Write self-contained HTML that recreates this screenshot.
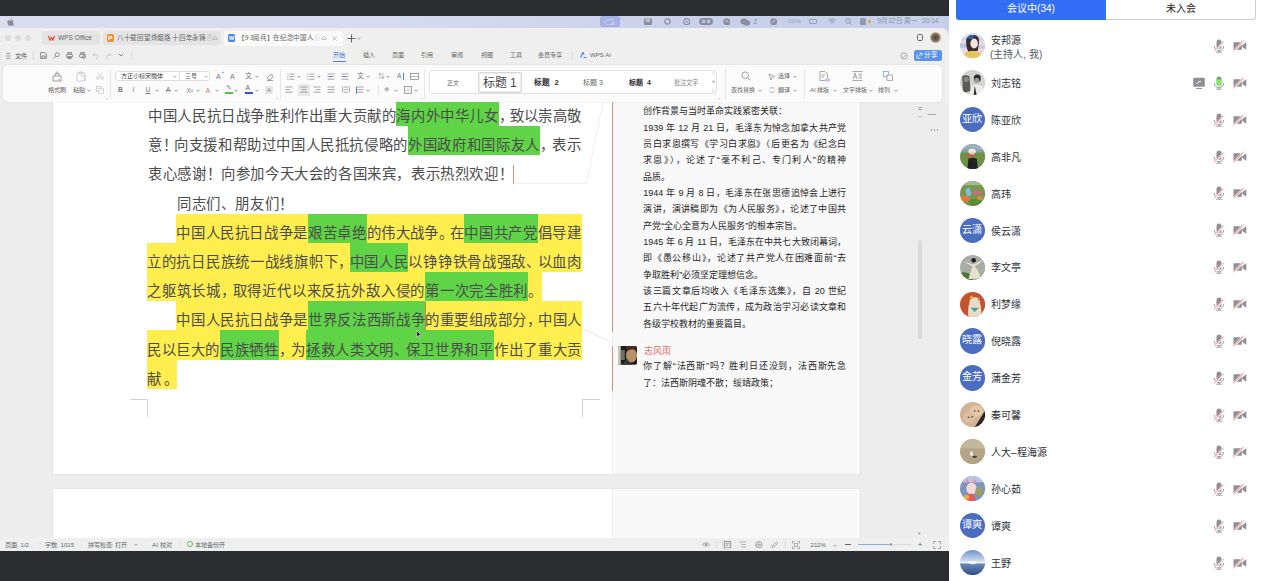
<!DOCTYPE html><html lang="zh-CN"><head><meta charset="utf-8"><style>
*{box-sizing:border-box;margin:0;padding:0}
html,body{width:1263px;height:581px;overflow:hidden;background:#2c2d31;font-family:"Liberation Sans",sans-serif;position:relative}
.a{position:absolute}
.t{position:absolute;white-space:nowrap;line-height:1}
</style></head><body>
<div class="a" style="left:0;top:0;width:949px;height:16px;background:#2c2d31"></div>
<div class="a" style="left:0;top:16px;width:949px;height:20px;background:linear-gradient(90deg,#d9ddef 0,#d6dbef 40%,#c8d1ea 75%,#c6d0ea 100%)"></div>
<div class="a" style="left:0;top:27.5px;width:949px;height:523px;background:#efefef;border-top-right-radius:8px"></div>
<div class="a" style="left:0;top:102px;width:949px;height:436px;background:#ededed"></div>
<div class="a" style="left:53px;top:102px;width:807px;height:372px;background:#fff;box-shadow:0 0 1.5px rgba(0,0,0,.12)"></div>
<div class="a" style="left:612px;top:102px;width:248px;height:372px;background:#f9f9f9;border-left:1px solid #eeeeee"></div>
<div class="a" style="left:53px;top:489px;width:807px;height:49px;background:#fff;box-shadow:0 0 1.5px rgba(0,0,0,.12)"></div>
<div class="a" style="left:612px;top:489px;width:248px;height:49px;background:#f9f9f9;border-left:1px solid #ececec"></div>
<div class="a" style="left:3px;top:65px;width:939px;height:37px;background:#fbfbfb;border-radius:5px;box-shadow:0 0 1.5px rgba(0,0,0,.18)"></div>
<div class="a" style="left:0;top:550.5px;width:949px;height:31px;background:#2c2d31"></div>
<svg class="a" style="left:7.0px;top:17.5px" width="7" height="8" viewBox="0 0 7 8"><path d="M3.6 1.9 C3.7 1 4.3 0.4 5 0.3 C5.1 1.1 4.5 1.8 3.6 1.9 Z M5.3 2.3 C6.1 2.3 6.6 2.8 6.8 3.1 C6.1 3.5 5.9 4.3 6 4.8 C6.1 5.4 6.5 5.9 7 6.1 C6.7 7 6.1 7.9 5.4 7.9 C4.9 7.9 4.7 7.6 4.1 7.6 C3.5 7.6 3.2 7.9 2.7 7.9 C1.9 7.9 0.3 6.2 0.3 4.3 C0.3 2.9 1.2 2.2 2.1 2.2 C2.7 2.2 3.1 2.6 3.6 2.6 C4.1 2.6 4.6 2.3 5.3 2.3 Z" fill="#8b8c98"/></svg>
<div class="a" style="left:600.2px;top:16.0px;width:19.4px;height:11.4px;background:#a6b1e4;border-radius:2.5px"></div>
<svg class="a" style="left:605.0px;top:18.8px" width="10" height="6.5" viewBox="0 0 10 6.5"><rect x="0.6" y="0.6" width="7.5" height="5" rx="0.8" fill="none" stroke="#c8d0f0" stroke-width="0.9"/><rect x="6.3" y="3.6" width="3.2" height="2.5" fill="#c8d0f0"/></svg>
<div class="a" style="left:644.0px;top:17.6px;width:8.0px;height:7.4px;background:#8a8fa0;border-radius:1px"></div>
<div class="t" style="left:645.2px;top:18.4px;font-size:5.5px;color:#d3d9ee;font-weight:bold">W</div>
<svg class="a" style="left:664.0px;top:17.8px" width="7" height="7" viewBox="0 0 7 7"><circle cx="3.5" cy="3.5" r="2.6" fill="none" stroke="#8a8fa0" stroke-width="1.3"/></svg>
<svg class="a" style="left:682.5px;top:17.8px" width="7.4" height="7.4" viewBox="0 0 7.4 7.4"><circle cx="3.7" cy="3.7" r="3" fill="none" stroke="#8a8fa0" stroke-width="1.2"/><circle cx="3.7" cy="3.7" r="1" fill="#8a8fa0"/></svg>
<div class="a" style="left:699.0px;top:17.8px;width:14.0px;height:7.4px;background:#8a8fa0;border-radius:3.7px"></div>
<div class="a" style="left:702.0px;top:19.6px;width:3.2px;height:3.8px;background:transparent;border:0.7px solid #c8d0e6"></div>
<div class="a" style="left:707.0px;top:19.6px;width:3.2px;height:3.8px;background:transparent;border:0.7px solid #c8d0e6"></div>
<svg class="a" style="left:722.5px;top:17.6px" width="7.6" height="7.6" viewBox="0 0 7.6 7.6"><circle cx="3.8" cy="3.8" r="3.6" fill="#8a8fa0"/><path d="M2 4 L4 2.5 L5.5 4.5" stroke="#d3d9ee" stroke-width="0.8" fill="none"/></svg>
<svg class="a" style="left:740.0px;top:17.6px" width="11" height="8" viewBox="0 0 11 8"><ellipse cx="4" cy="3.5" rx="3.6" ry="3" fill="#8a8fa0"/><ellipse cx="7" cy="5" rx="3.2" ry="2.7" fill="#8a8fa0"/></svg>
<div class="t" style="left:753.5px;top:18.8px;font-size:6.5px;color:#8a8fa0;">2</div>
<svg class="a" style="left:770.0px;top:17.8px" width="7.4" height="7.4" viewBox="0 0 7.4 7.4"><circle cx="3.7" cy="3.7" r="3.5" fill="#8a8fa0"/><path d="M2 5 L5 2" stroke="#d3d9ee" stroke-width="1"/></svg>
<div class="t" style="left:787.5px;top:18.5px;font-size:5.2px;color:#9aa0b2;">100%</div>
<div class="a" style="left:808.5px;top:18.9px;width:8.5px;height:5.0px;background:transparent;border:0.8px solid #9aa0b2;border-radius:1px"></div>
<svg class="a" style="left:827.5px;top:17.8px" width="8" height="6" viewBox="0 0 8 6"><path d="M0.6 2.2 Q4 -0.6 7.4 2.2 M1.8 3.6 Q4 1.8 6.2 3.6 M3 5 Q4 4.2 5 5" fill="none" stroke="#8a8fa0" stroke-width="0.9"/></svg>
<svg class="a" style="left:845.0px;top:18.0px" width="7" height="7" viewBox="0 0 7 7"><circle cx="2.9" cy="2.9" r="2.2" fill="none" stroke="#8a8fa0" stroke-width="0.9"/><path d="M4.5 4.5 L6.5 6.5" stroke="#8a8fa0" stroke-width="1"/></svg>
<div class="a" style="left:859.5px;top:18.3px;width:6.0px;height:6.5px;background:#8a8fa0;border-radius:1.5px;opacity:.85"></div>
<div class="a" style="left:868.3px;top:20.3px;width:2.4px;height:2.4px;background:#f0a030;border-radius:50%"></div>
<div class="t" style="left:877.5px;top:17.8px;font-size:6.6px;color:#8c92a6;">9月22日 周一&nbsp; 20:14</div>
<div class="a" style="left:4.8px;top:34.7px;width:6.4px;height:6.4px;background:#dcdcdc;border-radius:50%"></div>
<div class="a" style="left:14.8px;top:34.7px;width:6.4px;height:6.4px;background:#dcdcdc;border-radius:50%"></div>
<div class="a" style="left:24.8px;top:34.7px;width:6.4px;height:6.4px;background:#dcdcdc;border-radius:50%"></div>
<div class="a" style="left:42.0px;top:30.8px;width:58.0px;height:14.6px;background:#e4e4e4;border-radius:4px"></div>
<svg class="a" style="left:47.5px;top:34.5px" width="7" height="6" viewBox="0 0 7 6"><path d="M0.5 0.8 L2 5.2 L3.5 2.5 L5 5.2 L6.5 0.8" fill="none" stroke="#e84c3d" stroke-width="1.2"/></svg>
<div class="t" style="left:58.0px;top:35.4px;font-size:6.6px;color:#666;">WPS Office</div>
<div class="a" style="left:103.0px;top:30.8px;width:118.0px;height:14.6px;background:#e4e4e4;border-radius:4px"></div>
<div class="a" style="left:106.5px;top:34.0px;width:7.4px;height:8.0px;background:#f0903c;border-radius:1.5px"></div>
<div class="t" style="left:108.2px;top:35.3px;font-size:6px;color:#fff;font-weight:bold">P</div>
<div class="t" style="left:117.0px;top:35.4px;font-size:6.5px;color:#666;letter-spacing:-0.3px">八十载回望烽烟路 十四年永铸<span style="opacity:.22">長</span></div>
<svg class="a" style="left:211.5px;top:36.0px" width="6" height="4" viewBox="0 0 6 4"><path d="M1 3.5 H5 A1.2 1.2 0 0 0 4.5 1.5 A1.8 1.8 0 0 0 1.5 1.8 A1 1 0 0 0 1 3.5 Z" fill="none" stroke="#999" stroke-width="0.6"/></svg>
<div class="a" style="left:223.5px;top:30.8px;width:119.0px;height:15.2px;background:#fafafa;border-radius:4px 4px 0 0"></div>
<div class="a" style="left:227.8px;top:34.0px;width:7.6px;height:8.0px;background:#4a86e8;border-radius:1.5px"></div>
<div class="t" style="left:229.0px;top:35.5px;font-size:5.6px;color:#fff;font-weight:bold">W</div>
<div class="t" style="left:238.0px;top:35.4px;font-size:6.5px;color:#666;letter-spacing:-0.3px">【9·3阅兵】在纪念中国人<span style="opacity:.22">民</span></div>
<svg class="a" style="left:320.6px;top:36.0px" width="6" height="4" viewBox="0 0 6 4"><path d="M1 3.5 H5 A1.2 1.2 0 0 0 4.5 1.5 A1.8 1.8 0 0 0 1.5 1.8 A1 1 0 0 0 1 3.5 Z" fill="none" stroke="#999" stroke-width="0.6"/></svg>
<svg class="a" style="left:332.2px;top:35.8px" width="5" height="5" viewBox="0 0 5 5"><path d="M0.5 0.5 L4.5 4.5 M4.5 0.5 L0.5 4.5" stroke="#aaa" stroke-width="0.8"/></svg>
<svg class="a" style="left:347.0px;top:34.2px" width="9" height="9" viewBox="0 0 9 9"><path d="M4.5 0.5 V8.5 M0.5 4.5 H8.5" stroke="#555" stroke-width="0.9"/></svg>
<svg class="a" style="left:356.5px;top:37.0px" width="4" height="3" viewBox="0 0 4 3"><path d="M0.5 0.8 L2 2.3 L3.5 0.8" fill="none" stroke="#888" stroke-width="0.8"/></svg>
<div class="a" style="left:916.5px;top:33.5px;width:6.5px;height:7.0px;background:transparent;border:1px solid #666;border-radius:1.5px"></div>
<div class="a" style="left:930.0px;top:32.0px;width:11.0px;height:11.0px;background:radial-gradient(circle at 50% 50%,#4a4038 0,#7a6a5a 45%,#f0dcb0 80%);border-radius:50%"></div>
<svg class="a" style="left:5.8px;top:52.6px" width="5" height="6" viewBox="0 0 5 6"><path d="M0.3 0.6 H4.7 M0.3 3 H4.7 M0.3 5.4 H4.7" stroke="#777" stroke-width="0.7"/></svg>
<div class="t" style="left:15.0px;top:52.5px;font-size:6.2px;color:#555;">文件</div>
<div class="a" style="left:33.0px;top:51.0px;width:0.8px;height:9.0px;background:#d8d8d8;"></div>
<svg class="a" style="left:40.0px;top:52.0px" width="7" height="7" viewBox="0 0 7 7"><path d="M0.6 0.6 H5 L6.4 2 V6.4 H0.6 Z M2 6.4 V4 H5 V6.4" fill="none" stroke="#777" stroke-width="0.8"/></svg>
<svg class="a" style="left:53.0px;top:52.0px" width="7" height="7" viewBox="0 0 7 7"><circle cx="4.3" cy="2.7" r="2" fill="none" stroke="#777" stroke-width="0.8"/><path d="M3 4.2 L0.8 6.4" stroke="#777" stroke-width="0.8"/></svg>
<svg class="a" style="left:65.5px;top:52.0px" width="7" height="7" viewBox="0 0 7 7"><rect x="0.6" y="2.2" width="5.8" height="3.2" rx="1" fill="none" stroke="#777" stroke-width="0.8"/><rect x="1.8" y="0.6" width="3.4" height="1.6" fill="none" stroke="#777" stroke-width="0.7"/><rect x="1.8" y="4.5" width="3.4" height="2" fill="none" stroke="#777" stroke-width="0.7"/></svg>
<svg class="a" style="left:79.0px;top:52.0px" width="7" height="7" viewBox="0 0 7 7"><rect x="0.6" y="2.2" width="5.8" height="3.2" rx="1" fill="none" stroke="#777" stroke-width="0.8"/><rect x="1.8" y="0.6" width="3.4" height="1.6" fill="none" stroke="#777" stroke-width="0.7"/><circle cx="4.6" cy="5" r="1.4" fill="none" stroke="#777" stroke-width="0.7"/></svg>
<svg class="a" style="left:92.0px;top:52.0px" width="7" height="8" viewBox="0 0 7 8"><path d="M2.5 1 L1 2.8 L3 3.8 M1.2 2.8 Q5.5 2 5.5 5 Q5.5 7 3.5 7.2" fill="none" stroke="#c8c8c8" stroke-width="0.8"/></svg>
<svg class="a" style="left:105.0px;top:52.0px" width="7" height="8" viewBox="0 0 7 8"><path d="M4.5 1 L6 2.8 L4 3.8 M5.8 2.8 Q1.5 2 1.5 5 Q1.5 7 3.5 7.2" fill="none" stroke="#c8c8c8" stroke-width="0.8"/></svg>
<svg class="a" style="left:118.0px;top:53.0px" width="6" height="4" viewBox="0 0 6 4"><path d="M0.7 0.8 L3 3 L5.3 0.8" fill="none" stroke="#777" stroke-width="0.9"/></svg>
<div class="a" style="left:130.5px;top:51.0px;width:0.8px;height:9.0px;background:#dedede;"></div>
<div class="t" style="left:333.0px;top:52.2px;font-size:6.1px;color:#3f73d8;">开始</div>
<div class="t" style="left:362.6px;top:52.2px;font-size:6.1px;color:#666;">插入</div>
<div class="t" style="left:392.0px;top:52.2px;font-size:6.1px;color:#666;">页面</div>
<div class="t" style="left:421.0px;top:52.2px;font-size:6.1px;color:#666;">引用</div>
<div class="t" style="left:451.0px;top:52.2px;font-size:6.1px;color:#666;">审阅</div>
<div class="t" style="left:481.0px;top:52.2px;font-size:6.1px;color:#666;">视图</div>
<div class="t" style="left:510.0px;top:52.2px;font-size:6.1px;color:#666;">工具</div>
<div class="t" style="left:538.0px;top:52.2px;font-size:6.1px;color:#666;">会员专享</div>
<div class="a" style="left:333.0px;top:60.6px;width:12.5px;height:1.1px;background:#4d7fe0;border-radius:1px"></div>
<div class="a" style="left:572.0px;top:51.5px;width:0.7px;height:8.0px;background:#dcdcdc;"></div>
<svg class="a" style="left:579.5px;top:52.4px" width="7" height="6" viewBox="0 0 7 6"><path d="M0.5 5.5 L3 0.5 L4 2.5 M3.5 5.5 L6.5 5.5" fill="none" stroke="#5a6cf0" stroke-width="1.2"/></svg>
<div class="t" style="left:590.0px;top:52.2px;font-size:6.1px;color:#666;">WPS AI</div>
<svg class="a" style="left:899.5px;top:51.5px" width="8" height="8" viewBox="0 0 8 8"><circle cx="4" cy="4" r="3.2" fill="none" stroke="#999" stroke-width="0.8"/><path d="M2.4 4.2 L3.6 5.2 L5.6 3" fill="none" stroke="#999" stroke-width="0.8"/></svg>
<div class="a" style="left:913.5px;top:49.5px;width:28.5px;height:11.5px;background:#5b93ea;border-radius:2.5px"></div>
<svg class="a" style="left:915.5px;top:51.8px" width="7" height="7" viewBox="0 0 7 7"><path d="M3.5 1.2 H6 V3.5 M6 1.2 L3 4.2 M4.5 6.2 H1 V2.5" fill="none" stroke="#fff" stroke-width="0.8"/></svg>
<div class="t" style="left:924.0px;top:51.7px;font-size:6.5px;color:#fff;">分享</div>
<svg class="a" style="left:52.0px;top:70.5px" width="10" height="11" viewBox="0 0 10 11"><path d="M1 5 H9 V10 H1 Z M3 5 V2.5 H7 V5 M5 2.5 V0.5" fill="none" stroke="#8a8a8a" stroke-width="0.8"/><path d="M6 8 L9 10" stroke="#e0a060" stroke-width="0.8"/></svg>
<div class="t" style="left:48.0px;top:86.6px;font-size:6.2px;color:#666;">格式刷</div>
<svg class="a" style="left:76.0px;top:70.5px" width="10" height="11" viewBox="0 0 10 11"><path d="M1 2 H9 V10 H1 Z M3.5 1 H6.5 V3 H3.5 Z M5 5 H9 V10" fill="none" stroke="#c5c5c5" stroke-width="0.8"/></svg>
<div class="t" style="left:73.0px;top:86.6px;font-size:6.2px;color:#666;">粘贴</div>
<svg class="a" style="left:87.0px;top:89.0px" width="4" height="3" viewBox="0 0 4 3"><path d="M0.5 0.8 L2 2.3 L3.5 0.8" fill="none" stroke="#777" stroke-width="0.8"/></svg>
<svg class="a" style="left:96.0px;top:72.0px" width="8" height="8" viewBox="0 0 8 8"><circle cx="1.8" cy="6" r="1.3" fill="none" stroke="#c5c5c5" stroke-width="0.7"/><circle cx="6.2" cy="6" r="1.3" fill="none" stroke="#c5c5c5" stroke-width="0.7"/><path d="M2.5 5 L6.5 0.5 M5.5 5 L1.5 0.5" stroke="#c5c5c5" stroke-width="0.7"/></svg>
<svg class="a" style="left:96.0px;top:86.0px" width="8" height="8" viewBox="0 0 8 8"><rect x="0.5" y="0.5" width="4.5" height="5" fill="none" stroke="#c5c5c5" stroke-width="0.7"/><rect x="2.8" y="2.8" width="4.5" height="5" fill="#fbfbfb" stroke="#c5c5c5" stroke-width="0.7"/></svg>
<div class="t" style="left:106.0px;top:96.6px;font-size:4px;color:#aaa;">▿</div>
<div class="a" style="left:110.0px;top:69.0px;width:0.7px;height:30.0px;background:#e6e6e6;"></div>
<div class="a" style="left:115.2px;top:70.6px;width:95.0px;height:10.6px;background:#fff;border:1px solid #dedede;border-radius:2.5px"></div>
<div class="a" style="left:179.0px;top:71.0px;width:0.7px;height:10.0px;background:#e2e2e2;"></div>
<div class="t" style="left:121.0px;top:72.9px;font-size:6.2px;color:#444;">方正小标宋簡体</div>
<svg class="a" style="left:173.0px;top:74.8px" width="4" height="3" viewBox="0 0 4 3"><path d="M0.5 0.8 L2 2.3 L3.5 0.8" fill="none" stroke="#999" stroke-width="0.8"/></svg>
<div class="t" style="left:184.5px;top:73.0px;font-size:6px;color:#555;">三号</div>
<svg class="a" style="left:203.5px;top:74.8px" width="4" height="3" viewBox="0 0 4 3"><path d="M0.5 0.8 L2 2.3 L3.5 0.8" fill="none" stroke="#999" stroke-width="0.8"/></svg>
<div class="t" style="left:216.0px;top:72.5px;font-size:7px;color:#777;">A</div>
<div class="t" style="left:221.5px;top:71.3px;font-size:4.5px;color:#4a7fe0;">+</div>
<div class="t" style="left:230.0px;top:72.5px;font-size:7px;color:#777;">A</div>
<div class="t" style="left:235.5px;top:70.8px;font-size:4.5px;color:#4a7fe0;">-</div>
<div class="t" style="left:244.5px;top:72.6px;font-size:6.8px;color:#777;">文</div>
<svg class="a" style="left:254.6px;top:74.8px" width="4" height="3" viewBox="0 0 4 3"><path d="M0.5 0.8 L2 2.3 L3.5 0.8" fill="none" stroke="#777" stroke-width="0.8"/></svg>
<svg class="a" style="left:265.5px;top:72.5px" width="8" height="8" viewBox="0 0 8 8"><path d="M1 5 L5 1 L7.5 3.5 L4.5 6.5 H2.5 Z M1 7.5 H7" fill="none" stroke="#888" stroke-width="0.8"/></svg>
<div class="t" style="left:118.0px;top:87.4px;font-size:6.6px;color:#777;font-weight:bold">B</div>
<div class="t" style="left:132.5px;top:87.4px;font-size:6.6px;color:#777;font-style:italic">I</div>
<div class="t" style="left:145.5px;top:87.4px;font-size:6.6px;color:#777;text-decoration:underline">U</div>
<svg class="a" style="left:155.0px;top:89.0px" width="4" height="3" viewBox="0 0 4 3"><path d="M0.5 0.8 L2 2.3 L3.5 0.8" fill="none" stroke="#777" stroke-width="0.8"/></svg>
<div class="t" style="left:166.0px;top:87.4px;font-size:6.6px;color:#777;text-decoration:line-through">A</div>
<svg class="a" style="left:174.0px;top:89.0px" width="4" height="3" viewBox="0 0 4 3"><path d="M0.5 0.8 L2 2.3 L3.5 0.8" fill="none" stroke="#777" stroke-width="0.8"/></svg>
<div class="t" style="left:186.5px;top:87.5px;font-size:6.3px;color:#777;">X²</div>
<svg class="a" style="left:195.5px;top:89.0px" width="4" height="3" viewBox="0 0 4 3"><path d="M0.5 0.8 L2 2.3 L3.5 0.8" fill="none" stroke="#777" stroke-width="0.8"/></svg>
<div class="t" style="left:205.5px;top:87.2px;font-size:7px;color:#d08070;">A</div>
<svg class="a" style="left:215.0px;top:89.0px" width="4" height="3" viewBox="0 0 4 3"><path d="M0.5 0.8 L2 2.3 L3.5 0.8" fill="none" stroke="#777" stroke-width="0.8"/></svg>
<div class="t" style="left:226.0px;top:85.4px;font-size:6.5px;color:#888;">✎</div>
<div class="a" style="left:224.7px;top:92.4px;width:8.6px;height:1.8px;background:#56c048;"></div>
<svg class="a" style="left:234.0px;top:89.0px" width="4" height="3" viewBox="0 0 4 3"><path d="M0.5 0.8 L2 2.3 L3.5 0.8" fill="none" stroke="#777" stroke-width="0.8"/></svg>
<div class="t" style="left:245.5px;top:85.4px;font-size:6.6px;color:#666;">A</div>
<div class="a" style="left:244.5px;top:92.4px;width:8.6px;height:1.8px;background:#3a50d0;"></div>
<svg class="a" style="left:254.6px;top:89.0px" width="4" height="3" viewBox="0 0 4 3"><path d="M0.5 0.8 L2 2.3 L3.5 0.8" fill="none" stroke="#777" stroke-width="0.8"/></svg>
<div class="a" style="left:265.3px;top:85.5px;width:8.0px;height:8.0px;background:#e6e6e6;border-radius:1px"></div>
<div class="t" style="left:267.0px;top:86.7px;font-size:6px;color:#888;">A</div>
<div class="t" style="left:276.0px;top:96.6px;font-size:4px;color:#aaa;">▿</div>
<div class="a" style="left:279.5px;top:69.0px;width:0.7px;height:30.0px;background:#e6e6e6;"></div>
<svg class="a" style="left:286.5px;top:72.7px" width="8" height="7.2" viewBox="0 0 8 7.2"><line x1="2.5" y1="1.0" x2="7.5" y2="1.0" stroke="#888" stroke-width="0.75"/><circle cx="0.9" cy="1.0" r="0.6" fill="#888"/><line x1="2.5" y1="3.6" x2="7.5" y2="3.6" stroke="#888" stroke-width="0.75"/><circle cx="0.9" cy="3.6" r="0.6" fill="#888"/><line x1="2.5" y1="6.2" x2="7.5" y2="6.2" stroke="#888" stroke-width="0.75"/><circle cx="0.9" cy="6.2" r="0.6" fill="#888"/></svg>
<svg class="a" style="left:296.5px;top:74.8px" width="4" height="3" viewBox="0 0 4 3"><path d="M0.5 0.8 L2 2.3 L3.5 0.8" fill="none" stroke="#777" stroke-width="0.8"/></svg>
<svg class="a" style="left:306.5px;top:72.7px" width="8" height="7.2" viewBox="0 0 8 7.2"><line x1="2.5" y1="1.0" x2="7.5" y2="1.0" stroke="#888" stroke-width="0.75"/><circle cx="0.9" cy="1.0" r="0.6" fill="#888"/><line x1="2.5" y1="3.6" x2="7.5" y2="3.6" stroke="#888" stroke-width="0.75"/><circle cx="0.9" cy="3.6" r="0.6" fill="#888"/><line x1="2.5" y1="6.2" x2="7.5" y2="6.2" stroke="#888" stroke-width="0.75"/><circle cx="0.9" cy="6.2" r="0.6" fill="#888"/></svg>
<svg class="a" style="left:316.5px;top:74.8px" width="4" height="3" viewBox="0 0 4 3"><path d="M0.5 0.8 L2 2.3 L3.5 0.8" fill="none" stroke="#777" stroke-width="0.8"/></svg>
<svg class="a" style="left:326.6px;top:72.7px" width="8" height="7.2" viewBox="0 0 8 7.2"><line x1="0.5" y1="1.0" x2="7.5" y2="1.0" stroke="#888" stroke-width="0.75"/><line x1="0.5" y1="3.6" x2="7.5" y2="3.6" stroke="#888" stroke-width="0.75"/><line x1="0.5" y1="6.2" x2="7.5" y2="6.2" stroke="#888" stroke-width="0.75"/></svg>
<div class="a" style="left:328.5px;top:75.8px;width:3.0px;height:0.8px;background:#4a7fe0;"></div>
<svg class="a" style="left:340.7px;top:72.7px" width="8" height="7.2" viewBox="0 0 8 7.2"><line x1="0.5" y1="1.0" x2="7.5" y2="1.0" stroke="#888" stroke-width="0.75"/><line x1="0.5" y1="3.6" x2="7.5" y2="3.6" stroke="#888" stroke-width="0.75"/><line x1="0.5" y1="6.2" x2="7.5" y2="6.2" stroke="#888" stroke-width="0.75"/></svg>
<div class="a" style="left:343.0px;top:75.8px;width:3.0px;height:0.8px;background:#4a7fe0;"></div>
<div class="t" style="left:357.0px;top:72.6px;font-size:6.8px;color:#777;">文</div>
<svg class="a" style="left:365.7px;top:74.8px" width="4" height="3" viewBox="0 0 4 3"><path d="M0.5 0.8 L2 2.3 L3.5 0.8" fill="none" stroke="#777" stroke-width="0.8"/></svg>
<div class="t" style="left:377.5px;top:72.6px;font-size:6.8px;color:#888;">⇅</div>
<svg class="a" style="left:385.7px;top:74.8px" width="4" height="3" viewBox="0 0 4 3"><path d="M0.5 0.8 L2 2.3 L3.5 0.8" fill="none" stroke="#777" stroke-width="0.8"/></svg>
<div class="t" style="left:397.0px;top:72.7px;font-size:6.5px;color:#777;">A</div>
<div class="a" style="left:403.3px;top:72.5px;width:0.8px;height:7.0px;background:#4a7fe0;"></div>
<svg class="a" style="left:409.5px;top:72.5px" width="9" height="7" viewBox="0 0 9 7"><rect x="0.5" y="0.5" width="8" height="6" fill="none" stroke="#888" stroke-width="0.75"/><line x1="0.5" y1="3.5" x2="8.5" y2="3.5" stroke="#888" stroke-width="0.6"/></svg>
<div class="a" style="left:298.0px;top:84.0px;width:11.5px;height:12.0px;background:#e8e8e8;border-radius:1.5px"></div>
<svg class="a" style="left:285.4px;top:86.4px" width="8" height="7.2" viewBox="0 0 8 7.2"><line x1="0.5" y1="1.0" x2="7.5" y2="1.0" stroke="#888" stroke-width="0.75"/><line x1="0.5" y1="3.6" x2="5" y2="3.6" stroke="#888" stroke-width="0.75"/><line x1="0.5" y1="6.2" x2="7.5" y2="6.2" stroke="#888" stroke-width="0.75"/></svg>
<svg class="a" style="left:299.6px;top:86.4px" width="8" height="7.2" viewBox="0 0 8 7.2"><line x1="0.5" y1="1.0" x2="7.5" y2="1.0" stroke="#888" stroke-width="0.75"/><line x1="1.8" y1="3.6" x2="6.2" y2="3.6" stroke="#888" stroke-width="0.75"/><line x1="0.5" y1="6.2" x2="7.5" y2="6.2" stroke="#888" stroke-width="0.75"/></svg>
<svg class="a" style="left:313.0px;top:86.4px" width="8" height="7.2" viewBox="0 0 8 7.2"><line x1="0.5" y1="1.0" x2="7.5" y2="1.0" stroke="#888" stroke-width="0.75"/><line x1="3" y1="3.6" x2="7.5" y2="3.6" stroke="#888" stroke-width="0.75"/><line x1="0.5" y1="6.2" x2="7.5" y2="6.2" stroke="#888" stroke-width="0.75"/></svg>
<svg class="a" style="left:327.0px;top:86.4px" width="8" height="7.2" viewBox="0 0 8 7.2"><line x1="0.5" y1="1.0" x2="7.5" y2="1.0" stroke="#888" stroke-width="0.75"/><line x1="0.5" y1="3.6" x2="7.5" y2="3.6" stroke="#888" stroke-width="0.75"/><line x1="0.5" y1="6.2" x2="7.5" y2="6.2" stroke="#888" stroke-width="0.75"/></svg>
<svg class="a" style="left:341.5px;top:86.4px" width="8" height="7.2" viewBox="0 0 8 7.2"><path d="M0.6 0.5 V6.5 M7.4 0.5 V6.5 M2 1 H6 M2 3.6 H6 M2 6.2 H6" stroke="#888" stroke-width="0.7"/></svg>
<svg class="a" style="left:356.0px;top:86.4px" width="8" height="7.2" viewBox="0 0 8 7.2"><line x1="0.5" y1="1.0" x2="7.5" y2="1.0" stroke="#888" stroke-width="0.75"/><line x1="0.5" y1="3.6" x2="7.5" y2="3.6" stroke="#888" stroke-width="0.75"/><line x1="0.5" y1="6.2" x2="7.5" y2="6.2" stroke="#888" stroke-width="0.75"/></svg>
<div class="a" style="left:355.5px;top:86.5px;width:0.8px;height:7.0px;background:#4a7fe0;"></div>
<svg class="a" style="left:366.0px;top:89.0px" width="4" height="3" viewBox="0 0 4 3"><path d="M0.5 0.8 L2 2.3 L3.5 0.8" fill="none" stroke="#777" stroke-width="0.8"/></svg>
<div class="a" style="left:378.0px;top:85.0px;width:0.7px;height:10.0px;background:#e2e2e2;"></div>
<div class="t" style="left:384.0px;top:86.3px;font-size:6.8px;color:#aaa;">◈</div>
<svg class="a" style="left:394.0px;top:89.0px" width="4" height="3" viewBox="0 0 4 3"><path d="M0.5 0.8 L2 2.3 L3.5 0.8" fill="none" stroke="#777" stroke-width="0.8"/></svg>
<svg class="a" style="left:403.5px;top:86.0px" width="8" height="8" viewBox="0 0 8 8"><rect x="0.5" y="0.5" width="7" height="7" fill="none" stroke="#888" stroke-width="0.75"/><path d="M4 0.5 V7.5 M0.5 4 H7.5" stroke="#bbb" stroke-width="0.5"/></svg>
<svg class="a" style="left:413.7px;top:89.0px" width="4" height="3" viewBox="0 0 4 3"><path d="M0.5 0.8 L2 2.3 L3.5 0.8" fill="none" stroke="#777" stroke-width="0.8"/></svg>
<div class="t" style="left:421.0px;top:96.6px;font-size:4px;color:#aaa;">▿</div>
<div class="a" style="left:424.3px;top:69.0px;width:0.7px;height:30.0px;background:#e6e6e6;"></div>
<div class="a" style="left:429.0px;top:70.3px;width:288.4px;height:24.2px;background:#fff;border:1px solid #e2e2e2;border-radius:3px"></div>
<div class="t" style="left:423.3px;width:60px;text-align:center;top:79.9px;font-size:6px;color:#666;">正文</div>
<div class="a" style="left:477.5px;top:72.0px;width:44.5px;height:20.9px;background:#fff;border:1px solid #d8d8d8;border-radius:2px;box-shadow:inset 0 0 0 1px #eee"></div>
<div class="t" style="left:469.7px;width:60px;text-align:center;top:77.0px;font-size:12px;color:#444;">标题 1</div>
<div class="t" style="left:516.5px;width:60px;text-align:center;top:79.0px;font-size:7.6px;color:#333;font-weight:bold">标题&nbsp; 2</div>
<div class="t" style="left:563.0px;width:60px;text-align:center;top:79.4px;font-size:7px;color:#666;">标题 3</div>
<div class="t" style="left:610.0px;width:60px;text-align:center;top:79.4px;font-size:7px;color:#333;font-weight:bold">标题&nbsp; 4</div>
<div class="t" style="left:656.0px;width:60px;text-align:center;top:79.7px;font-size:6.3px;color:#888;">批注文字</div>
<div class="t" style="left:712.0px;top:71.2px;font-size:5px;color:#bbb;">˄</div>
<div class="t" style="left:712.0px;top:80.2px;font-size:5px;color:#555;">˅</div>
<div class="t" style="left:712.0px;top:88.5px;font-size:4.5px;color:#888;">⩡</div>
<div class="t" style="left:718.0px;top:96.6px;font-size:4px;color:#aaa;">▿</div>
<div class="a" style="left:724.5px;top:69.0px;width:0.7px;height:30.0px;background:#e6e6e6;"></div>
<svg class="a" style="left:740.5px;top:71.0px" width="10" height="10" viewBox="0 0 10 10"><circle cx="4.2" cy="4.2" r="3.3" fill="none" stroke="#888" stroke-width="0.8"/><path d="M6.6 6.6 L9.3 9.3" stroke="#888" stroke-width="0.9"/></svg>
<div class="t" style="left:731.0px;top:86.7px;font-size:6px;color:#666;">查找替换</div>
<svg class="a" style="left:758.3px;top:89.0px" width="4" height="3" viewBox="0 0 4 3"><path d="M0.5 0.8 L2 2.3 L3.5 0.8" fill="none" stroke="#777" stroke-width="0.8"/></svg>
<svg class="a" style="left:767.5px;top:72.5px" width="8" height="8" viewBox="0 0 8 8"><path d="M1 1 L6.5 3.5 L4 4.5 L3 7 Z" fill="none" stroke="#888" stroke-width="0.7"/></svg>
<div class="t" style="left:778.0px;top:73.0px;font-size:6px;color:#666;">选择</div>
<svg class="a" style="left:792.5px;top:75.3px" width="4" height="3" viewBox="0 0 4 3"><path d="M0.5 0.8 L2 2.3 L3.5 0.8" fill="none" stroke="#777" stroke-width="0.8"/></svg>
<svg class="a" style="left:767.5px;top:86.0px" width="8" height="8" viewBox="0 0 8 8"><path d="M1.5 3 A3 3 0 0 1 6.5 3 M6.5 5 A3 3 0 0 1 1.5 5" fill="none" stroke="#888" stroke-width="0.7"/></svg>
<div class="t" style="left:778.0px;top:86.7px;font-size:6px;color:#666;">翻译</div>
<svg class="a" style="left:792.5px;top:89.0px" width="4" height="3" viewBox="0 0 4 3"><path d="M0.5 0.8 L2 2.3 L3.5 0.8" fill="none" stroke="#777" stroke-width="0.8"/></svg>
<div class="a" style="left:804.2px;top:69.0px;width:0.7px;height:30.0px;background:#e6e6e6;"></div>
<svg class="a" style="left:818.5px;top:71.0px" width="11" height="11" viewBox="0 0 11 11"><path d="M1 0.5 H6 L8.5 3 V6 M6 9.5 H1 V0.5 M2.5 4 H6 M2.5 6 H5" fill="none" stroke="#888" stroke-width="0.7"/><path d="M8.5 6.5 L9.2 8.3 L10.8 9 L9.2 9.7 L8.5 11 L7.8 9.7 L6.2 9 L7.8 8.3 Z" fill="none" stroke="#8a6cf0" stroke-width="0.6"/></svg>
<div class="t" style="left:810.0px;top:86.7px;font-size:6px;color:#666;">AI 排版</div>
<svg class="a" style="left:832.8px;top:89.0px" width="4" height="3" viewBox="0 0 4 3"><path d="M0.5 0.8 L2 2.3 L3.5 0.8" fill="none" stroke="#777" stroke-width="0.8"/></svg>
<svg class="a" style="left:852.0px;top:71.0px" width="11" height="10" viewBox="0 0 11 10"><path d="M0.5 0.5 H10.5 M0.5 9.5 H10.5 M1 8 L3 2 L5 8 M1.8 6 H4.2 M6.5 3 H10 M6.5 5 H10 M6.5 7 H10" fill="none" stroke="#888" stroke-width="0.7"/></svg>
<div class="t" style="left:843.0px;top:86.7px;font-size:6px;color:#666;">文字排版</div>
<svg class="a" style="left:868.8px;top:89.0px" width="4" height="3" viewBox="0 0 4 3"><path d="M0.5 0.8 L2 2.3 L3.5 0.8" fill="none" stroke="#777" stroke-width="0.8"/></svg>
<svg class="a" style="left:883.0px;top:71.0px" width="10" height="10" viewBox="0 0 10 10"><rect x="0.5" y="0.5" width="5" height="5" fill="none" stroke="#6f94e6" stroke-width="0.7"/><rect x="4" y="4" width="5.5" height="5.5" fill="#fbfbfb" stroke="#8a8a8a" stroke-width="0.7"/></svg>
<div class="t" style="left:878.0px;top:86.7px;font-size:6px;color:#666;">排列</div>
<svg class="a" style="left:893.7px;top:89.0px" width="4" height="3" viewBox="0 0 4 3"><path d="M0.5 0.8 L2 2.3 L3.5 0.8" fill="none" stroke="#777" stroke-width="0.8"/></svg>
<div class="a" style="left:0;top:102px;width:949px;height:436px;overflow:hidden"><div class="a" style="left:0;top:-102px;width:949px;height:581px"><span class="t" style="left:148.20px;top:109.12px;font-size:14.4px;color:#4c4c4c">中</span>
<span class="t" style="left:162.79px;top:109.12px;font-size:14.4px;color:#4c4c4c">国</span>
<span class="t" style="left:177.39px;top:109.12px;font-size:14.4px;color:#4c4c4c">人</span>
<span class="t" style="left:191.98px;top:109.12px;font-size:14.4px;color:#4c4c4c">民</span>
<span class="t" style="left:206.58px;top:109.12px;font-size:14.4px;color:#4c4c4c">抗</span>
<span class="t" style="left:221.17px;top:109.12px;font-size:14.4px;color:#4c4c4c">日</span>
<span class="t" style="left:235.76px;top:109.12px;font-size:14.4px;color:#4c4c4c">战</span>
<span class="t" style="left:250.36px;top:109.12px;font-size:14.4px;color:#4c4c4c">争</span>
<span class="t" style="left:264.95px;top:109.12px;font-size:14.4px;color:#4c4c4c">胜</span>
<span class="t" style="left:279.55px;top:109.12px;font-size:14.4px;color:#4c4c4c">利</span>
<span class="t" style="left:294.14px;top:109.12px;font-size:14.4px;color:#4c4c4c">作</span>
<span class="t" style="left:308.74px;top:109.12px;font-size:14.4px;color:#4c4c4c">出</span>
<span class="t" style="left:323.33px;top:109.12px;font-size:14.4px;color:#4c4c4c">重</span>
<span class="t" style="left:337.92px;top:109.12px;font-size:14.4px;color:#4c4c4c">大</span>
<span class="t" style="left:352.52px;top:109.12px;font-size:14.4px;color:#4c4c4c">贡</span>
<span class="t" style="left:367.11px;top:109.12px;font-size:14.4px;color:#4c4c4c">献</span>
<span class="t" style="left:381.71px;top:109.12px;font-size:14.4px;color:#4c4c4c">的</span>
<div class="a" style="left:396.30px;top:96.82px;width:102.50px;height:29.38px;background:#5fd446"></div>
<span class="t" style="left:396.30px;top:109.12px;font-size:14.4px;color:#4c4c4c">海</span>
<span class="t" style="left:410.90px;top:109.12px;font-size:14.4px;color:#4c4c4c">内</span>
<span class="t" style="left:425.50px;top:109.12px;font-size:14.4px;color:#4c4c4c">外</span>
<span class="t" style="left:440.10px;top:109.12px;font-size:14.4px;color:#4c4c4c">中</span>
<span class="t" style="left:454.70px;top:109.12px;font-size:14.4px;color:#4c4c4c">华</span>
<span class="t" style="left:469.30px;top:109.12px;font-size:14.4px;color:#4c4c4c">儿</span>
<span class="t" style="left:483.90px;top:109.12px;font-size:14.4px;color:#4c4c4c">女</span>
<span class="t" style="left:498.50px;top:109.12px;font-size:14.4px;color:#4c4c4c">，</span>
<span class="t" style="left:509.70px;top:109.12px;font-size:14.4px;color:#4c4c4c">致</span>
<span class="t" style="left:524.06px;top:109.12px;font-size:14.4px;color:#4c4c4c">以</span>
<span class="t" style="left:538.42px;top:109.12px;font-size:14.4px;color:#4c4c4c">崇</span>
<span class="t" style="left:552.78px;top:109.12px;font-size:14.4px;color:#4c4c4c">高</span>
<span class="t" style="left:567.14px;top:109.12px;font-size:14.4px;color:#4c4c4c">敬</span>
<span class="t" style="left:148.20px;top:138.30px;font-size:14.4px;color:#4c4c4c">意</span>
<span class="t" style="left:162.81px;top:138.30px;font-size:14.4px;color:#4c4c4c">！</span>
<span class="t" style="left:174.20px;top:138.30px;font-size:14.4px;color:#4c4c4c">向</span>
<span class="t" style="left:188.81px;top:138.30px;font-size:14.4px;color:#4c4c4c">支</span>
<span class="t" style="left:203.41px;top:138.30px;font-size:14.4px;color:#4c4c4c">援</span>
<span class="t" style="left:218.02px;top:138.30px;font-size:14.4px;color:#4c4c4c">和</span>
<span class="t" style="left:232.62px;top:138.30px;font-size:14.4px;color:#4c4c4c">帮</span>
<span class="t" style="left:247.23px;top:138.30px;font-size:14.4px;color:#4c4c4c">助</span>
<span class="t" style="left:261.84px;top:138.30px;font-size:14.4px;color:#4c4c4c">过</span>
<span class="t" style="left:276.44px;top:138.30px;font-size:14.4px;color:#4c4c4c">中</span>
<span class="t" style="left:291.05px;top:138.30px;font-size:14.4px;color:#4c4c4c">国</span>
<span class="t" style="left:305.66px;top:138.30px;font-size:14.4px;color:#4c4c4c">人</span>
<span class="t" style="left:320.26px;top:138.30px;font-size:14.4px;color:#4c4c4c">民</span>
<span class="t" style="left:334.87px;top:138.30px;font-size:14.4px;color:#4c4c4c">抵</span>
<span class="t" style="left:349.47px;top:138.30px;font-size:14.4px;color:#4c4c4c">抗</span>
<span class="t" style="left:364.08px;top:138.30px;font-size:14.4px;color:#4c4c4c">侵</span>
<span class="t" style="left:378.69px;top:138.30px;font-size:14.4px;color:#4c4c4c">略</span>
<span class="t" style="left:393.29px;top:138.30px;font-size:14.4px;color:#4c4c4c">的</span>
<div class="a" style="left:407.90px;top:126.00px;width:132.30px;height:29.38px;background:#5fd446"></div>
<span class="t" style="left:407.90px;top:138.30px;font-size:14.4px;color:#4c4c4c">外</span>
<span class="t" style="left:422.57px;top:138.30px;font-size:14.4px;color:#4c4c4c">国</span>
<span class="t" style="left:437.23px;top:138.30px;font-size:14.4px;color:#4c4c4c">政</span>
<span class="t" style="left:451.90px;top:138.30px;font-size:14.4px;color:#4c4c4c">府</span>
<span class="t" style="left:466.57px;top:138.30px;font-size:14.4px;color:#4c4c4c">和</span>
<span class="t" style="left:481.23px;top:138.30px;font-size:14.4px;color:#4c4c4c">国</span>
<span class="t" style="left:495.90px;top:138.30px;font-size:14.4px;color:#4c4c4c">际</span>
<span class="t" style="left:510.57px;top:138.30px;font-size:14.4px;color:#4c4c4c">友</span>
<span class="t" style="left:525.23px;top:138.30px;font-size:14.4px;color:#4c4c4c">人</span>
<span class="t" style="left:539.90px;top:138.30px;font-size:14.4px;color:#4c4c4c">，</span>
<span class="t" style="left:551.57px;top:138.30px;font-size:14.4px;color:#4c4c4c">表</span>
<span class="t" style="left:566.54px;top:138.30px;font-size:14.4px;color:#4c4c4c">示</span>
<span class="t" style="left:148.20px;top:167.48px;font-size:14.4px;color:#4c4c4c">衷</span>
<span class="t" style="left:162.80px;top:167.48px;font-size:14.4px;color:#4c4c4c">心</span>
<span class="t" style="left:177.40px;top:167.48px;font-size:14.4px;color:#4c4c4c">感</span>
<span class="t" style="left:192.00px;top:167.48px;font-size:14.4px;color:#4c4c4c">谢</span>
<span class="t" style="left:206.60px;top:167.48px;font-size:14.4px;color:#4c4c4c">！</span>
<span class="t" style="left:221.20px;top:167.48px;font-size:14.4px;color:#4c4c4c">向</span>
<span class="t" style="left:235.80px;top:167.48px;font-size:14.4px;color:#4c4c4c">参</span>
<span class="t" style="left:250.40px;top:167.48px;font-size:14.4px;color:#4c4c4c">加</span>
<span class="t" style="left:265.00px;top:167.48px;font-size:14.4px;color:#4c4c4c">今</span>
<span class="t" style="left:279.60px;top:167.48px;font-size:14.4px;color:#4c4c4c">天</span>
<span class="t" style="left:294.20px;top:167.48px;font-size:14.4px;color:#4c4c4c">大</span>
<span class="t" style="left:308.80px;top:167.48px;font-size:14.4px;color:#4c4c4c">会</span>
<span class="t" style="left:323.40px;top:167.48px;font-size:14.4px;color:#4c4c4c">的</span>
<span class="t" style="left:338.00px;top:167.48px;font-size:14.4px;color:#4c4c4c">各</span>
<span class="t" style="left:352.60px;top:167.48px;font-size:14.4px;color:#4c4c4c">国</span>
<span class="t" style="left:367.20px;top:167.48px;font-size:14.4px;color:#4c4c4c">来</span>
<span class="t" style="left:381.80px;top:167.48px;font-size:14.4px;color:#4c4c4c">宾</span>
<span class="t" style="left:396.40px;top:167.48px;font-size:14.4px;color:#4c4c4c">，</span>
<span class="t" style="left:411.00px;top:167.48px;font-size:14.4px;color:#4c4c4c">表</span>
<span class="t" style="left:425.60px;top:167.48px;font-size:14.4px;color:#4c4c4c">示</span>
<span class="t" style="left:440.20px;top:167.48px;font-size:14.4px;color:#4c4c4c">热</span>
<span class="t" style="left:454.80px;top:167.48px;font-size:14.4px;color:#4c4c4c">烈</span>
<span class="t" style="left:469.40px;top:167.48px;font-size:14.4px;color:#4c4c4c">欢</span>
<span class="t" style="left:484.00px;top:167.48px;font-size:14.4px;color:#4c4c4c">迎</span>
<span class="t" style="left:498.60px;top:167.48px;font-size:14.4px;color:#4c4c4c">！</span>
<span class="t" style="left:177.00px;top:196.66px;font-size:14.4px;color:#4c4c4c">同</span>
<span class="t" style="left:191.60px;top:196.66px;font-size:14.4px;color:#4c4c4c">志</span>
<span class="t" style="left:206.20px;top:196.66px;font-size:14.4px;color:#4c4c4c">们</span>
<span class="t" style="left:220.80px;top:196.66px;font-size:14.4px;color:#4c4c4c">、</span>
<span class="t" style="left:235.40px;top:196.66px;font-size:14.4px;color:#4c4c4c">朋</span>
<span class="t" style="left:250.00px;top:196.66px;font-size:14.4px;color:#4c4c4c">友</span>
<span class="t" style="left:264.60px;top:196.66px;font-size:14.4px;color:#4c4c4c">们</span>
<span class="t" style="left:279.20px;top:196.66px;font-size:14.4px;color:#4c4c4c">！</span>
<div class="a" style="left:176.40px;top:213.54px;width:131.80px;height:29.38px;background:#ffee4e"></div>
<span class="t" style="left:176.40px;top:225.84px;font-size:14.4px;color:#4c4c4c">中</span>
<span class="t" style="left:191.01px;top:225.84px;font-size:14.4px;color:#4c4c4c">国</span>
<span class="t" style="left:205.62px;top:225.84px;font-size:14.4px;color:#4c4c4c">人</span>
<span class="t" style="left:220.23px;top:225.84px;font-size:14.4px;color:#4c4c4c">民</span>
<span class="t" style="left:234.84px;top:225.84px;font-size:14.4px;color:#4c4c4c">抗</span>
<span class="t" style="left:249.46px;top:225.84px;font-size:14.4px;color:#4c4c4c">日</span>
<span class="t" style="left:264.07px;top:225.84px;font-size:14.4px;color:#4c4c4c">战</span>
<span class="t" style="left:278.68px;top:225.84px;font-size:14.4px;color:#4c4c4c">争</span>
<span class="t" style="left:293.29px;top:225.84px;font-size:14.4px;color:#4c4c4c">是</span>
<div class="a" style="left:307.90px;top:213.54px;width:59.30px;height:29.38px;background:#5fd446"></div>
<span class="t" style="left:307.90px;top:225.84px;font-size:14.4px;color:#4c4c4c">艰</span>
<span class="t" style="left:322.65px;top:225.84px;font-size:14.4px;color:#4c4c4c">苦</span>
<span class="t" style="left:337.40px;top:225.84px;font-size:14.4px;color:#4c4c4c">卓</span>
<span class="t" style="left:352.15px;top:225.84px;font-size:14.4px;color:#4c4c4c">绝</span>
<div class="a" style="left:366.90px;top:213.54px;width:97.60px;height:29.38px;background:#ffee4e"></div>
<span class="t" style="left:366.90px;top:225.84px;font-size:14.4px;color:#4c4c4c">的</span>
<span class="t" style="left:381.25px;top:225.84px;font-size:14.4px;color:#4c4c4c">伟</span>
<span class="t" style="left:395.60px;top:225.84px;font-size:14.4px;color:#4c4c4c">大</span>
<span class="t" style="left:409.95px;top:225.84px;font-size:14.4px;color:#4c4c4c">战</span>
<span class="t" style="left:424.30px;top:225.84px;font-size:14.4px;color:#4c4c4c">争</span>
<span class="t" style="left:438.66px;top:225.84px;font-size:14.4px;color:#4c4c4c">。</span>
<span class="t" style="left:449.85px;top:225.84px;font-size:14.4px;color:#4c4c4c">在</span>
<div class="a" style="left:464.20px;top:213.54px;width:73.70px;height:29.38px;background:#5fd446"></div>
<span class="t" style="left:464.20px;top:225.84px;font-size:14.4px;color:#4c4c4c">中</span>
<span class="t" style="left:478.88px;top:225.84px;font-size:14.4px;color:#4c4c4c">国</span>
<span class="t" style="left:493.56px;top:225.84px;font-size:14.4px;color:#4c4c4c">共</span>
<span class="t" style="left:508.24px;top:225.84px;font-size:14.4px;color:#4c4c4c">产</span>
<span class="t" style="left:522.92px;top:225.84px;font-size:14.4px;color:#4c4c4c">党</span>
<div class="a" style="left:537.60px;top:213.54px;width:44.60px;height:29.38px;background:#ffee4e"></div>
<span class="t" style="left:537.60px;top:225.84px;font-size:14.4px;color:#4c4c4c">倡</span>
<span class="t" style="left:552.37px;top:225.84px;font-size:14.4px;color:#4c4c4c">导</span>
<span class="t" style="left:567.13px;top:225.84px;font-size:14.4px;color:#4c4c4c">建</span>
<div class="a" style="left:146.90px;top:242.72px;width:203.20px;height:29.38px;background:#ffee4e"></div>
<span class="t" style="left:146.90px;top:255.02px;font-size:14.4px;color:#4c4c4c">立</span>
<span class="t" style="left:161.62px;top:255.02px;font-size:14.4px;color:#4c4c4c">的</span>
<span class="t" style="left:176.35px;top:255.02px;font-size:14.4px;color:#4c4c4c">抗</span>
<span class="t" style="left:191.07px;top:255.02px;font-size:14.4px;color:#4c4c4c">日</span>
<span class="t" style="left:205.80px;top:255.02px;font-size:14.4px;color:#4c4c4c">民</span>
<span class="t" style="left:220.52px;top:255.02px;font-size:14.4px;color:#4c4c4c">族</span>
<span class="t" style="left:235.25px;top:255.02px;font-size:14.4px;color:#4c4c4c">统</span>
<span class="t" style="left:249.97px;top:255.02px;font-size:14.4px;color:#4c4c4c">一</span>
<span class="t" style="left:264.69px;top:255.02px;font-size:14.4px;color:#4c4c4c">战</span>
<span class="t" style="left:279.42px;top:255.02px;font-size:14.4px;color:#4c4c4c">线</span>
<span class="t" style="left:294.14px;top:255.02px;font-size:14.4px;color:#4c4c4c">旗</span>
<span class="t" style="left:308.87px;top:255.02px;font-size:14.4px;color:#4c4c4c">帜</span>
<span class="t" style="left:323.59px;top:255.02px;font-size:14.4px;color:#4c4c4c">下</span>
<span class="t" style="left:338.32px;top:255.02px;font-size:14.4px;color:#4c4c4c">，</span>
<div class="a" style="left:349.80px;top:242.72px;width:58.80px;height:29.38px;background:#5fd446"></div>
<span class="t" style="left:349.80px;top:255.02px;font-size:14.4px;color:#4c4c4c">中</span>
<span class="t" style="left:364.43px;top:255.02px;font-size:14.4px;color:#4c4c4c">国</span>
<span class="t" style="left:379.05px;top:255.02px;font-size:14.4px;color:#4c4c4c">人</span>
<span class="t" style="left:393.68px;top:255.02px;font-size:14.4px;color:#4c4c4c">民</span>
<div class="a" style="left:408.30px;top:242.72px;width:173.90px;height:29.38px;background:#ffee4e"></div>
<span class="t" style="left:408.30px;top:255.02px;font-size:14.4px;color:#4c4c4c">以</span>
<span class="t" style="left:423.04px;top:255.02px;font-size:14.4px;color:#4c4c4c">铮</span>
<span class="t" style="left:437.77px;top:255.02px;font-size:14.4px;color:#4c4c4c">铮</span>
<span class="t" style="left:452.51px;top:255.02px;font-size:14.4px;color:#4c4c4c">铁</span>
<span class="t" style="left:467.25px;top:255.02px;font-size:14.4px;color:#4c4c4c">骨</span>
<span class="t" style="left:481.98px;top:255.02px;font-size:14.4px;color:#4c4c4c">战</span>
<span class="t" style="left:496.72px;top:255.02px;font-size:14.4px;color:#4c4c4c">强</span>
<span class="t" style="left:511.46px;top:255.02px;font-size:14.4px;color:#4c4c4c">敌</span>
<span class="t" style="left:526.19px;top:255.02px;font-size:14.4px;color:#4c4c4c">、</span>
<span class="t" style="left:537.69px;top:255.02px;font-size:14.4px;color:#4c4c4c">以</span>
<span class="t" style="left:552.43px;top:255.02px;font-size:14.4px;color:#4c4c4c">血</span>
<span class="t" style="left:567.16px;top:255.02px;font-size:14.4px;color:#4c4c4c">肉</span>
<div class="a" style="left:146.90px;top:271.90px;width:278.60px;height:29.38px;background:#ffee4e"></div>
<span class="t" style="left:146.90px;top:284.20px;font-size:14.4px;color:#4c4c4c">之</span>
<span class="t" style="left:161.72px;top:284.20px;font-size:14.4px;color:#4c4c4c">躯</span>
<span class="t" style="left:176.54px;top:284.20px;font-size:14.4px;color:#4c4c4c">筑</span>
<span class="t" style="left:191.36px;top:284.20px;font-size:14.4px;color:#4c4c4c">长</span>
<span class="t" style="left:206.18px;top:284.20px;font-size:14.4px;color:#4c4c4c">城</span>
<span class="t" style="left:220.99px;top:284.20px;font-size:14.4px;color:#4c4c4c">，</span>
<span class="t" style="left:232.55px;top:284.20px;font-size:14.4px;color:#4c4c4c">取</span>
<span class="t" style="left:247.37px;top:284.20px;font-size:14.4px;color:#4c4c4c">得</span>
<span class="t" style="left:262.19px;top:284.20px;font-size:14.4px;color:#4c4c4c">近</span>
<span class="t" style="left:277.01px;top:284.20px;font-size:14.4px;color:#4c4c4c">代</span>
<span class="t" style="left:291.83px;top:284.20px;font-size:14.4px;color:#4c4c4c">以</span>
<span class="t" style="left:306.65px;top:284.20px;font-size:14.4px;color:#4c4c4c">来</span>
<span class="t" style="left:321.47px;top:284.20px;font-size:14.4px;color:#4c4c4c">反</span>
<span class="t" style="left:336.29px;top:284.20px;font-size:14.4px;color:#4c4c4c">抗</span>
<span class="t" style="left:351.11px;top:284.20px;font-size:14.4px;color:#4c4c4c">外</span>
<span class="t" style="left:365.92px;top:284.20px;font-size:14.4px;color:#4c4c4c">敌</span>
<span class="t" style="left:380.74px;top:284.20px;font-size:14.4px;color:#4c4c4c">入</span>
<span class="t" style="left:395.56px;top:284.20px;font-size:14.4px;color:#4c4c4c">侵</span>
<span class="t" style="left:410.38px;top:284.20px;font-size:14.4px;color:#4c4c4c">的</span>
<div class="a" style="left:425.20px;top:271.90px;width:103.00px;height:29.38px;background:#5fd446"></div>
<span class="t" style="left:425.20px;top:284.20px;font-size:14.4px;color:#4c4c4c">第</span>
<span class="t" style="left:439.87px;top:284.20px;font-size:14.4px;color:#4c4c4c">一</span>
<span class="t" style="left:454.54px;top:284.20px;font-size:14.4px;color:#4c4c4c">次</span>
<span class="t" style="left:469.21px;top:284.20px;font-size:14.4px;color:#4c4c4c">完</span>
<span class="t" style="left:483.89px;top:284.20px;font-size:14.4px;color:#4c4c4c">全</span>
<span class="t" style="left:498.56px;top:284.20px;font-size:14.4px;color:#4c4c4c">胜</span>
<span class="t" style="left:513.23px;top:284.20px;font-size:14.4px;color:#4c4c4c">利</span>
<div class="a" style="left:527.90px;top:271.90px;width:14.50px;height:29.38px;background:#ffee4e"></div>
<span class="t" style="left:527.90px;top:284.20px;font-size:14.4px;color:#4c4c4c">。</span>
<div class="a" style="left:176.40px;top:301.08px;width:131.80px;height:29.38px;background:#ffee4e"></div>
<span class="t" style="left:176.40px;top:313.38px;font-size:14.4px;color:#4c4c4c">中</span>
<span class="t" style="left:191.01px;top:313.38px;font-size:14.4px;color:#4c4c4c">国</span>
<span class="t" style="left:205.62px;top:313.38px;font-size:14.4px;color:#4c4c4c">人</span>
<span class="t" style="left:220.23px;top:313.38px;font-size:14.4px;color:#4c4c4c">民</span>
<span class="t" style="left:234.84px;top:313.38px;font-size:14.4px;color:#4c4c4c">抗</span>
<span class="t" style="left:249.46px;top:313.38px;font-size:14.4px;color:#4c4c4c">日</span>
<span class="t" style="left:264.07px;top:313.38px;font-size:14.4px;color:#4c4c4c">战</span>
<span class="t" style="left:278.68px;top:313.38px;font-size:14.4px;color:#4c4c4c">争</span>
<span class="t" style="left:293.29px;top:313.38px;font-size:14.4px;color:#4c4c4c">是</span>
<div class="a" style="left:307.90px;top:301.08px;width:117.60px;height:29.38px;background:#5fd446"></div>
<span class="t" style="left:307.90px;top:313.38px;font-size:14.4px;color:#4c4c4c">世</span>
<span class="t" style="left:322.56px;top:313.38px;font-size:14.4px;color:#4c4c4c">界</span>
<span class="t" style="left:337.23px;top:313.38px;font-size:14.4px;color:#4c4c4c">反</span>
<span class="t" style="left:351.89px;top:313.38px;font-size:14.4px;color:#4c4c4c">法</span>
<span class="t" style="left:366.55px;top:313.38px;font-size:14.4px;color:#4c4c4c">西</span>
<span class="t" style="left:381.21px;top:313.38px;font-size:14.4px;color:#4c4c4c">斯</span>
<span class="t" style="left:395.88px;top:313.38px;font-size:14.4px;color:#4c4c4c">战</span>
<span class="t" style="left:410.54px;top:313.38px;font-size:14.4px;color:#4c4c4c">争</span>
<div class="a" style="left:425.20px;top:301.08px;width:157.00px;height:29.38px;background:#ffee4e"></div>
<span class="t" style="left:425.20px;top:313.38px;font-size:14.4px;color:#4c4c4c">的</span>
<span class="t" style="left:439.74px;top:313.38px;font-size:14.4px;color:#4c4c4c">重</span>
<span class="t" style="left:454.27px;top:313.38px;font-size:14.4px;color:#4c4c4c">要</span>
<span class="t" style="left:468.81px;top:313.38px;font-size:14.4px;color:#4c4c4c">组</span>
<span class="t" style="left:483.34px;top:313.38px;font-size:14.4px;color:#4c4c4c">成</span>
<span class="t" style="left:497.88px;top:313.38px;font-size:14.4px;color:#4c4c4c">部</span>
<span class="t" style="left:512.42px;top:313.38px;font-size:14.4px;color:#4c4c4c">分</span>
<span class="t" style="left:526.95px;top:313.38px;font-size:14.4px;color:#4c4c4c">，</span>
<span class="t" style="left:538.29px;top:313.38px;font-size:14.4px;color:#4c4c4c">中</span>
<span class="t" style="left:552.83px;top:313.38px;font-size:14.4px;color:#4c4c4c">国</span>
<span class="t" style="left:567.36px;top:313.38px;font-size:14.4px;color:#4c4c4c">人</span>
<div class="a" style="left:146.90px;top:330.26px;width:73.50px;height:29.38px;background:#ffee4e"></div>
<span class="t" style="left:146.90px;top:342.56px;font-size:14.4px;color:#4c4c4c">民</span>
<span class="t" style="left:161.54px;top:342.56px;font-size:14.4px;color:#4c4c4c">以</span>
<span class="t" style="left:176.18px;top:342.56px;font-size:14.4px;color:#4c4c4c">巨</span>
<span class="t" style="left:190.82px;top:342.56px;font-size:14.4px;color:#4c4c4c">大</span>
<span class="t" style="left:205.46px;top:342.56px;font-size:14.4px;color:#4c4c4c">的</span>
<div class="a" style="left:220.10px;top:330.26px;width:59.00px;height:29.38px;background:#5fd446"></div>
<span class="t" style="left:220.10px;top:342.56px;font-size:14.4px;color:#4c4c4c">民</span>
<span class="t" style="left:234.78px;top:342.56px;font-size:14.4px;color:#4c4c4c">族</span>
<span class="t" style="left:249.45px;top:342.56px;font-size:14.4px;color:#4c4c4c">牺</span>
<span class="t" style="left:264.12px;top:342.56px;font-size:14.4px;color:#4c4c4c">牲</span>
<div class="a" style="left:278.80px;top:330.26px;width:27.30px;height:29.38px;background:#ffee4e"></div>
<span class="t" style="left:278.80px;top:342.56px;font-size:14.4px;color:#4c4c4c">，</span>
<span class="t" style="left:290.63px;top:342.56px;font-size:14.4px;color:#4c4c4c">为</span>
<div class="a" style="left:305.80px;top:330.26px;width:188.40px;height:29.38px;background:#5fd446"></div>
<span class="t" style="left:305.80px;top:342.56px;font-size:14.4px;color:#4c4c4c">拯</span>
<span class="t" style="left:320.52px;top:342.56px;font-size:14.4px;color:#4c4c4c">救</span>
<span class="t" style="left:335.24px;top:342.56px;font-size:14.4px;color:#4c4c4c">人</span>
<span class="t" style="left:349.95px;top:342.56px;font-size:14.4px;color:#4c4c4c">类</span>
<span class="t" style="left:364.67px;top:342.56px;font-size:14.4px;color:#4c4c4c">文</span>
<span class="t" style="left:379.39px;top:342.56px;font-size:14.4px;color:#4c4c4c">明</span>
<span class="t" style="left:394.11px;top:342.56px;font-size:14.4px;color:#4c4c4c">、</span>
<span class="t" style="left:405.59px;top:342.56px;font-size:14.4px;color:#4c4c4c">保</span>
<span class="t" style="left:420.31px;top:342.56px;font-size:14.4px;color:#4c4c4c">卫</span>
<span class="t" style="left:435.03px;top:342.56px;font-size:14.4px;color:#4c4c4c">世</span>
<span class="t" style="left:449.75px;top:342.56px;font-size:14.4px;color:#4c4c4c">界</span>
<span class="t" style="left:464.46px;top:342.56px;font-size:14.4px;color:#4c4c4c">和</span>
<span class="t" style="left:479.18px;top:342.56px;font-size:14.4px;color:#4c4c4c">平</span>
<div class="a" style="left:493.90px;top:330.26px;width:88.30px;height:29.38px;background:#ffee4e"></div>
<span class="t" style="left:493.90px;top:342.56px;font-size:14.4px;color:#4c4c4c">作</span>
<span class="t" style="left:508.57px;top:342.56px;font-size:14.4px;color:#4c4c4c">出</span>
<span class="t" style="left:523.23px;top:342.56px;font-size:14.4px;color:#4c4c4c">了</span>
<span class="t" style="left:537.90px;top:342.56px;font-size:14.4px;color:#4c4c4c">重</span>
<span class="t" style="left:552.57px;top:342.56px;font-size:14.4px;color:#4c4c4c">大</span>
<span class="t" style="left:567.23px;top:342.56px;font-size:14.4px;color:#4c4c4c">贡</span>
<div class="a" style="left:146.90px;top:359.44px;width:30.20px;height:29.38px;background:#ffee4e"></div>
<span class="t" style="left:146.90px;top:371.74px;font-size:14.4px;color:#4c4c4c">献</span>
<span class="t" style="left:163.70px;top:371.74px;font-size:14.4px;color:#4c4c4c">。</span><div class="t" style="left:643.3px;top:107.4px;font-size:9px;color:#262626;">创作背景与当时革命实践紧密关联：</div>
<div class="t" style="left:643.3px;top:123.7px;font-size:9px;color:#262626;width:203px;text-align:justify;text-align-last:justify;white-space:nowrap">1939 年 12 月 21 日，毛泽东为悼念加拿大共产党</div>
<div class="t" style="left:643.3px;top:140.1px;font-size:9px;color:#262626;width:203px;text-align:justify;text-align-last:justify;white-space:nowrap">员白求恩撰写《学习白求恩》（后更名为《纪念白</div>
<div class="t" style="left:643.3px;top:156.4px;font-size:9px;color:#262626;width:203px;text-align:justify;text-align-last:justify;white-space:nowrap">求恩》），论述了“毫不利己、专门利人”的精神</div>
<div class="t" style="left:643.3px;top:172.7px;font-size:9px;color:#262626;">品质。</div>
<div class="t" style="left:643.3px;top:189.0px;font-size:9px;color:#262626;width:203px;text-align:justify;text-align-last:justify;white-space:nowrap">1944 年 9 月 8 日，毛泽东在张思德追悼会上进行</div>
<div class="t" style="left:643.3px;top:205.4px;font-size:9px;color:#262626;width:203px;text-align:justify;text-align-last:justify;white-space:nowrap">演讲，演讲稿即为《为人民服务》，论述了中国共</div>
<div class="t" style="left:643.3px;top:221.7px;font-size:9px;color:#262626;">产党“全心全意为人民服务”的根本宗旨。</div>
<div class="t" style="left:643.3px;top:238.0px;font-size:9px;color:#262626;width:203px;text-align:justify;text-align-last:justify;white-space:nowrap">1945 年 6 月 11 日，毛泽东在中共七大致闭幕词，</div>
<div class="t" style="left:643.3px;top:254.4px;font-size:9px;color:#262626;width:203px;text-align:justify;text-align-last:justify;white-space:nowrap">即《愚公移山》，论述了共产党人在困难面前“去</div>
<div class="t" style="left:643.3px;top:270.7px;font-size:9px;color:#262626;">争取胜利”必须坚定理想信念。</div>
<div class="t" style="left:643.3px;top:287.0px;font-size:9px;color:#262626;width:203px;text-align:justify;text-align-last:justify;white-space:nowrap">该三篇文章后均收入《毛泽东选集》，自 20 世纪</div>
<div class="t" style="left:643.3px;top:303.4px;font-size:9px;color:#262626;width:203px;text-align:justify;text-align-last:justify;white-space:nowrap">五六十年代起广为流传，成为政治学习必读文章和</div>
<div class="t" style="left:643.3px;top:319.7px;font-size:9px;color:#262626;">各级学校教材的重要篇目。</div>
<svg class="a" style="left:618px;top:346px;border-radius:2px" width="19.3" height="18.7" viewBox="0 0 19.3 18.7"><rect width="19.3" height="18.7" fill="#1e1a18"/><rect x="0" y="0" width="2.8" height="18.7" fill="#c8c8b8"/><rect x="2.8" y="4" width="4" height="10" fill="#6a7068"/><ellipse cx="13.5" cy="9.5" rx="5.5" ry="7" fill="#b89068"/><path d="M8 0 H19.3 V4 Q14 2 9 5 Z" fill="#4a2a20"/><path d="M4 18.7 L9 13 L14 18.7 Z" fill="#3a3838"/></svg>
<div class="t" style="left:643.5px;top:346.7px;font-size:9px;color:#d8706a;">志风雨</div>
<div class="t" style="left:643.3px;top:362.4px;font-size:9px;color:#262626;width:203px;text-align:justify;text-align-last:justify;white-space:nowrap">你了解“法西斯”吗？胜利日还没到，法西斯先急</div>
<div class="t" style="left:643.3px;top:379.1px;font-size:9px;color:#262626">了：法西斯阴魂不散；绥靖政策；</div><div class="a" style="left:612.0px;top:102.0px;width:1.0px;height:229.7px;background:#d98a86;"></div>
<div class="a" style="left:612.0px;top:346.4px;width:1.0px;height:45.0px;background:#d98a86;"></div>
<div class="a" style="left:130.0px;top:399.0px;width:17.5px;height:0.8px;background:#d2d2d2;"></div>
<div class="a" style="left:147.0px;top:399.0px;width:0.8px;height:18.0px;background:#d2d2d2;"></div>
<div class="a" style="left:582.0px;top:399.0px;width:17.5px;height:0.8px;background:#d2d2d2;"></div>
<div class="a" style="left:582.0px;top:399.0px;width:0.8px;height:18.0px;background:#d2d2d2;"></div>
<div class="a" style="left:512.5px;top:164.5px;width:1.0px;height:19.0px;background:#d9908a;"></div>
<svg class="a" style="left:513.0px;top:100.0px" width="100" height="85" viewBox="0 0 100 85"><path d="M0 83.5 H73.5 L90 2.5" fill="none" stroke="#f0c8c8" stroke-width="0.6" stroke-dasharray="1.5 1"/></svg>
<svg class="a" style="left:582.0px;top:325.0px" width="32" height="22" viewBox="0 0 32 22"><path d="M0.4 4.4 H3 L30.5 18.3" fill="none" stroke="#f0cccc" stroke-width="0.6"/></svg>
<div class="a" style="left:424.8px;top:302.0px;width:0.9px;height:28.0px;background:#c08050;"></div>
<svg class="a" style="left:415.5px;top:329.5px" width="6" height="9" viewBox="0 0 6 9"><path d="M0.5 0.5 L0.5 7 L2 5.6 L3.2 8.3 L4.2 7.9 L3 5.2 L5.2 5.2 Z" fill="#222" stroke="#fff" stroke-width="0.5"/></svg>
<div class="a" style="left:918.4px;top:240.0px;width:3.5px;height:98.6px;background:#dadada;border-radius:1.5px"></div>
<div class="t" style="left:918.0px;top:105.8px;font-size:5px;color:#999;">≐</div>
<div class="a" style="left:919.4px;top:115.5px;width:1.4px;height:1.4px;background:#aaa;border-radius:50%"></div>
<div class="a" style="left:928.0px;top:114.0px;width:8.0px;height:0.8px;background:#aaa;"></div>
<div class="a" style="left:930.8px;top:129.3px;width:1.4px;height:1.4px;background:#999;border-radius:50%"></div>
<div class="a" style="left:933.8px;top:129.3px;width:1.4px;height:1.4px;background:#999;border-radius:50%"></div>
<div class="a" style="left:936.8px;top:129.3px;width:1.4px;height:1.4px;background:#999;border-radius:50%"></div>
<div class="t" style="left:918.2px;top:531.2px;font-size:5px;color:#999;">▾</div></div></div>
<div class="a" style="left:949.4px;top:273.5px;width:0.8px;height:19.5px;background:#a8aab8;"></div>
<div class="a" style="left:952.4px;top:273.5px;width:0.8px;height:19.5px;background:#a8aab8;"></div>
<div class="a" style="left:0.0px;top:538.0px;width:949.0px;height:12.6px;background:#efefef;border-bottom-right-radius:6px"></div>
<div class="t" style="left:5.0px;top:541.6px;font-size:6.2px;color:#666;">页面: 1/2</div>
<div class="a" style="left:38.0px;top:541.0px;width:0.6px;height:6.0px;background:#e2e2e2;"></div>
<div class="t" style="left:45.0px;top:541.6px;font-size:6.2px;color:#666;">字数: 1015</div>
<div class="a" style="left:81.0px;top:541.0px;width:0.6px;height:6.0px;background:#e2e2e2;"></div>
<div class="t" style="left:88.0px;top:541.6px;font-size:6.2px;color:#666;">拼写检查: 打开</div>
<svg class="a" style="left:133.5px;top:542.7px" width="4" height="3" viewBox="0 0 4 3"><path d="M0.5 0.8 L2 2.3 L3.5 0.8" fill="none" stroke="#888" stroke-width="0.8"/></svg>
<div class="a" style="left:145.0px;top:541.0px;width:0.6px;height:6.0px;background:#e2e2e2;"></div>
<div class="t" style="left:152.0px;top:541.6px;font-size:6.2px;color:#666;">AI 校对</div>
<div class="a" style="left:180.0px;top:541.0px;width:0.6px;height:6.0px;background:#e2e2e2;"></div>
<div class="a" style="left:187.3px;top:541.4px;width:5.6px;height:5.6px;background:#e8f4e8;border:1.8px solid #5cb85a;border-radius:50%"></div>
<div class="t" style="left:195.0px;top:541.6px;font-size:6.2px;color:#666;">本地备份开</div>
<svg class="a" style="left:701.5px;top:541.5px" width="8" height="5" viewBox="0 0 8 5"><path d="M0.5 2.5 Q4 -0.8 7.5 2.5 Q4 5.8 0.5 2.5 Z" fill="none" stroke="#888" stroke-width="0.7"/><circle cx="4" cy="2.5" r="1" fill="#888"/></svg>
<div class="a" style="left:716.0px;top:540.5px;width:0.6px;height:7.0px;background:#d8d8d8;"></div>
<div class="a" style="left:721.5px;top:539.5px;width:10.5px;height:10.0px;background:#e0e0e0;border-radius:1.5px"></div>
<svg class="a" style="left:723.5px;top:541.0px" width="7" height="7" viewBox="0 0 7 7"><rect x="0.5" y="0.5" width="6" height="6.5" fill="none" stroke="#888" stroke-width="0.7"/><path d="M2 2.5 H5 M2 4 H4" stroke="#888" stroke-width="0.6"/></svg>
<svg class="a" style="left:738.5px;top:540.5px" width="8" height="7" viewBox="0 0 8 7"><path d="M0.5 1 H7 M2.5 3.5 H7 M2.5 6 H7" stroke="#888" stroke-width="0.6" fill="none"/></svg>
<svg class="a" style="left:755.0px;top:540.5px" width="7.5" height="7.5" viewBox="0 0 7.5 7.5"><circle cx="3.75" cy="3.75" r="3.2" fill="none" stroke="#888" stroke-width="0.7"/><path d="M0.5 3.75 H7 M3.75 0.5 V7" stroke="#888" stroke-width="0.6"/></svg>
<svg class="a" style="left:771.0px;top:540.5px" width="7.5" height="7.5" viewBox="0 0 7.5 7.5"><path d="M1 6.5 L1.5 4.5 L5.5 0.8 L6.8 2 L2.8 6 Z" fill="none" stroke="#888" stroke-width="0.7"/></svg>
<div class="a" style="left:785.0px;top:540.5px;width:0.6px;height:7.0px;background:#d8d8d8;"></div>
<svg class="a" style="left:792.0px;top:540.5px" width="8" height="8" viewBox="0 0 8 8"><path d="M0.5 2.5 V0.5 H2.5 M5.5 0.5 H7.5 V2.5 M7.5 5.5 V7.5 H5.5 M2.5 7.5 H0.5 V5.5" fill="none" stroke="#888" stroke-width="0.7"/><rect x="2.3" y="2.3" width="3.4" height="3.4" fill="none" stroke="#888" stroke-width="0.6"/></svg>
<div class="t" style="left:810.5px;top:541.6px;font-size:6.2px;color:#666;">211%</div>
<svg class="a" style="left:833.2px;top:543.8px" width="4" height="3" viewBox="0 0 4 3"><path d="M0.5 0.8 L2 2.3 L3.5 0.8" fill="none" stroke="#888" stroke-width="0.8"/></svg>
<div class="a" style="left:845.0px;top:543.6px;width:6.0px;height:1.2px;background:#666;"></div>
<div class="a" style="left:858.0px;top:543.5px;width:32.0px;height:1.6px;background:#86aaea;border-radius:1px"></div>
<div class="a" style="left:890.0px;top:543.7px;width:21.0px;height:1.0px;background:#d8d8d8;"></div>
<div class="a" style="left:889.8px;top:542.8px;width:2.0px;height:2.8px;background:#fff;border:0.5px solid #999;border-radius:1px"></div>
<div class="t" style="left:917.7px;top:540.6px;font-size:8px;color:#666;">+</div>
<svg class="a" style="left:932.5px;top:540.5px" width="8" height="8" viewBox="0 0 8 8"><path d="M0.5 3 V0.5 H3 M5 0.5 H7.5 V3 M7.5 5 V7.5 H5 M3 7.5 H0.5 V5" fill="none" stroke="#888" stroke-width="0.7"/></svg>
<div class="a" style="left:949px;top:0;width:314px;height:581px;background:#fff"></div>
<div class="a" style="left:956px;top:0;width:150px;height:19.6px;background:#326ef5;border-bottom-left-radius:3px"></div>
<div class="t" style="left:956px;top:3.6px;width:150px;text-align:center;font-size:10px;color:#fff">会议中(34)</div>
<div class="a" style="left:1106px;top:-1px;width:150px;height:20.6px;border:1px solid #c9ccd6;border-left:none;border-bottom-right-radius:3px;background:#fff"></div>
<div class="t" style="left:1106px;top:3.6px;width:150px;text-align:center;font-size:10px;color:#222">未入会</div>
<svg class="a" style="left:959.50px;top:33.20px" width="25.2" height="25.2" viewBox="0 0 24 24"><defs><clipPath id="cphoto1"><circle cx="12" cy="12" r="12"/></clipPath></defs><g clip-path="url(#cphoto1)"><rect width="24" height="24" fill="#e4dbe6"/><rect x="0" y="4" width="24" height="3" fill="#c8d4ea"/><rect x="0" y="10" width="6" height="4" fill="#b8c8e8"/><rect x="18" y="12" width="6" height="3" fill="#d8c0d0"/>
<path d="M6 6 Q8 1 14 2 Q19 3 18 10 L17 17 L8 18 Q5 12 6 6 Z" fill="#3a2c34"/><path d="M6 5 Q9 1 14 2 L12 6 Z" fill="#3060b0"/>
<ellipse cx="13.5" cy="10" rx="3.6" ry="4.8" fill="#f2e2da"/><path d="M2 24 Q4 17 12 17 Q20 17 22 24 Z" fill="#e6c45a"/></g></svg>
<div class="t" style="left:991px;top:35.80px;font-size:10px;color:#2c2f38">安邦源</div>
<div class="t" style="left:990px;top:50.10px;font-size:10px;color:#55585f">(主持人, 我)</div>
<svg class="a" style="left:1212.40px;top:38.80px" width="14" height="14" viewBox="0 0 14 14"><rect x="4.5" y="0.4" width="5" height="9.6" rx="2.5" fill="#8e9096"/><path d="M2.3 7 A4.7 4.7 0 0 0 11.7 7" fill="none" stroke="#8e9096" stroke-width="0.9"/><line x1="7" y1="11.6" x2="7" y2="13" stroke="#8e9096" stroke-width="0.9"/><line x1="4.2" y1="13.2" x2="9.8" y2="13.2" stroke="#8e9096" stroke-width="0.9"/><line x1="2.2" y1="12.6" x2="11.8" y2="3" stroke="#fff" stroke-width="2"/><line x1="2" y1="12.4" x2="11.8" y2="2.6" stroke="#f07a70" stroke-width="0.9"/></svg>
<svg class="a" style="left:1232.50px;top:38.80px" width="14" height="14" viewBox="0 0 14 14"><rect x="0.5" y="3.2" width="8.3" height="7.6" rx="0.6" fill="#8e9096"/><path d="M9.3 6 L13.3 3.2 L13.3 10.8 L9.3 8 Z" fill="#8e9096"/><line x1="0.6" y1="12.2" x2="10.4" y2="2.4" stroke="#fff" stroke-width="2.2"/><line x1="0.4" y1="12" x2="10.6" y2="2" stroke="#f06a60" stroke-width="1"/></svg>
<svg class="a" style="left:959.50px;top:70.11px" width="25.2" height="25.2" viewBox="0 0 24 24"><defs><clipPath id="cphoto2"><circle cx="12" cy="12" r="12"/></clipPath></defs><g clip-path="url(#cphoto2)"><rect width="24" height="24" fill="#d2d2ce"/><path d="M2 6 Q6 4 9 6 L10 20 L3 22 Z" fill="#5a5a58"/><ellipse cx="6" cy="9" rx="2.5" ry="2.5" fill="#888"/>
<ellipse cx="16.5" cy="8" rx="3.3" ry="3.6" fill="#2a2a2a"/><ellipse cx="16" cy="10" rx="2.4" ry="2.6" fill="#9a9a96"/><path d="M9 24 L11 15 Q16 13 21 15 L23 24 Z" fill="#ececea"/><path d="M14 15 L16 24 L13 24 Z" fill="#333"/></g></svg>
<div class="t" style="left:991px;top:78.91px;font-size:10px;color:#2c2f38">刘志铭</div>
<svg class="a" style="left:1212.40px;top:75.71px" width="14" height="14" viewBox="0 0 14 14"><rect x="4.5" y="0.4" width="5" height="9.6" rx="2.5" fill="#8e9096"/><clipPath id="mclip"><rect x="4.5" y="0.4" width="5" height="9.6" rx="2.5"/></clipPath><rect x="4.5" y="3.4" width="5" height="7" fill="#7df25c" clip-path="url(#mclip)"/><path d="M2.3 7 A4.7 4.7 0 0 0 11.7 7" fill="none" stroke="#8e9096" stroke-width="0.9"/><line x1="7" y1="11.6" x2="7" y2="13" stroke="#8e9096" stroke-width="0.9"/><line x1="4.2" y1="13.2" x2="9.8" y2="13.2" stroke="#8e9096" stroke-width="0.9"/></svg>
<svg class="a" style="left:1232.50px;top:75.71px" width="14" height="14" viewBox="0 0 14 14"><rect x="0.5" y="3.2" width="8.3" height="7.6" rx="0.6" fill="#8e9096"/><path d="M9.3 6 L13.3 3.2 L13.3 10.8 L9.3 8 Z" fill="#8e9096"/><line x1="0.6" y1="12.2" x2="10.4" y2="2.4" stroke="#fff" stroke-width="2.2"/><line x1="0.4" y1="12" x2="10.6" y2="2" stroke="#f06a60" stroke-width="1"/></svg>
<svg class="a" style="left:1192.30px;top:75.71px" width="14" height="14" viewBox="0 0 14 14"><rect x="1.2" y="1.8" width="11.6" height="9" rx="1.3" fill="#8e9096"/><path d="M4.5 8 Q6 5.5 9 5.2" stroke="#fff" stroke-width="1" fill="none"/><line x1="4" y1="12.6" x2="10" y2="12.6" stroke="#8e9096" stroke-width="1"/></svg>
<div class="a" style="left:959.5px;top:107.02px;width:25.2px;height:25.2px;border-radius:50%;background:#4a6dbf"></div>
<div class="t" style="left:959.5px;top:114.02px;width:25.2px;text-align:center;font-size:10.2px;color:#fff;letter-spacing:-0.3px">亚欣</div>
<div class="t" style="left:991px;top:115.82px;font-size:10px;color:#2c2f38">陈亚欣</div>
<svg class="a" style="left:1212.40px;top:112.62px" width="14" height="14" viewBox="0 0 14 14"><rect x="4.5" y="0.4" width="5" height="9.6" rx="2.5" fill="#8e9096"/><path d="M2.3 7 A4.7 4.7 0 0 0 11.7 7" fill="none" stroke="#8e9096" stroke-width="0.9"/><line x1="7" y1="11.6" x2="7" y2="13" stroke="#8e9096" stroke-width="0.9"/><line x1="4.2" y1="13.2" x2="9.8" y2="13.2" stroke="#8e9096" stroke-width="0.9"/><line x1="2.2" y1="12.6" x2="11.8" y2="3" stroke="#fff" stroke-width="2"/><line x1="2" y1="12.4" x2="11.8" y2="2.6" stroke="#f07a70" stroke-width="0.9"/></svg>
<svg class="a" style="left:1232.50px;top:112.62px" width="14" height="14" viewBox="0 0 14 14"><rect x="0.5" y="3.2" width="8.3" height="7.6" rx="0.6" fill="#8e9096"/><path d="M9.3 6 L13.3 3.2 L13.3 10.8 L9.3 8 Z" fill="#8e9096"/><line x1="0.6" y1="12.2" x2="10.4" y2="2.4" stroke="#fff" stroke-width="2.2"/><line x1="0.4" y1="12" x2="10.6" y2="2" stroke="#f06a60" stroke-width="1"/></svg>
<svg class="a" style="left:959.50px;top:143.93px" width="25.2" height="25.2" viewBox="0 0 24 24"><defs><clipPath id="cphoto4"><circle cx="12" cy="12" r="12"/></clipPath></defs><g clip-path="url(#cphoto4)"><rect width="24" height="24" fill="#6e9244"/><rect width="24" height="6" fill="#9cb2c6"/><path d="M0 6 L10 3 L24 7 L24 8 L0 8 Z" fill="#8aa0a8"/>
<path d="M7 24 L8 14 Q12 12 16 14 L17 24 Z" fill="#222"/><ellipse cx="11.5" cy="7" rx="3.5" ry="2.6" fill="#f0ece4"/><ellipse cx="11.5" cy="9" rx="2" ry="2" fill="#e8d0b8"/><path d="M5 10 Q10 15 15 10 Z" fill="#d85050"/></g></svg>
<div class="t" style="left:991px;top:152.73px;font-size:10px;color:#2c2f38">高非凡</div>
<svg class="a" style="left:1212.40px;top:149.53px" width="14" height="14" viewBox="0 0 14 14"><rect x="4.5" y="0.4" width="5" height="9.6" rx="2.5" fill="#8e9096"/><path d="M2.3 7 A4.7 4.7 0 0 0 11.7 7" fill="none" stroke="#8e9096" stroke-width="0.9"/><line x1="7" y1="11.6" x2="7" y2="13" stroke="#8e9096" stroke-width="0.9"/><line x1="4.2" y1="13.2" x2="9.8" y2="13.2" stroke="#8e9096" stroke-width="0.9"/><line x1="2.2" y1="12.6" x2="11.8" y2="3" stroke="#fff" stroke-width="2"/><line x1="2" y1="12.4" x2="11.8" y2="2.6" stroke="#f07a70" stroke-width="0.9"/></svg>
<svg class="a" style="left:1232.50px;top:149.53px" width="14" height="14" viewBox="0 0 14 14"><rect x="0.5" y="3.2" width="8.3" height="7.6" rx="0.6" fill="#8e9096"/><path d="M9.3 6 L13.3 3.2 L13.3 10.8 L9.3 8 Z" fill="#8e9096"/><line x1="0.6" y1="12.2" x2="10.4" y2="2.4" stroke="#fff" stroke-width="2.2"/><line x1="0.4" y1="12" x2="10.6" y2="2" stroke="#f06a60" stroke-width="1"/></svg>
<svg class="a" style="left:959.50px;top:180.84px" width="25.2" height="25.2" viewBox="0 0 24 24"><defs><clipPath id="cphoto5"><circle cx="12" cy="12" r="12"/></clipPath></defs><g clip-path="url(#cphoto5)"><rect width="24" height="24" fill="#76984e"/><rect width="24" height="4" fill="#a8b89a"/><path d="M5 8 L9 6 L11 13 L7 15 Z" fill="#7cc0e0"/>
<ellipse cx="5" cy="17" rx="5" ry="3" fill="#e07a3a"/><ellipse cx="16" cy="11" rx="5" ry="2" fill="#c87080"/><ellipse cx="14" cy="20" rx="6" ry="3" fill="#5a8a3c"/><ellipse cx="19" cy="16" rx="3" ry="2" fill="#d09040"/></g></svg>
<div class="t" style="left:991px;top:189.64px;font-size:10px;color:#2c2f38">高玮</div>
<svg class="a" style="left:1212.40px;top:186.44px" width="14" height="14" viewBox="0 0 14 14"><rect x="4.5" y="0.4" width="5" height="9.6" rx="2.5" fill="#8e9096"/><path d="M2.3 7 A4.7 4.7 0 0 0 11.7 7" fill="none" stroke="#8e9096" stroke-width="0.9"/><line x1="7" y1="11.6" x2="7" y2="13" stroke="#8e9096" stroke-width="0.9"/><line x1="4.2" y1="13.2" x2="9.8" y2="13.2" stroke="#8e9096" stroke-width="0.9"/><line x1="2.2" y1="12.6" x2="11.8" y2="3" stroke="#fff" stroke-width="2"/><line x1="2" y1="12.4" x2="11.8" y2="2.6" stroke="#f07a70" stroke-width="0.9"/></svg>
<svg class="a" style="left:1232.50px;top:186.44px" width="14" height="14" viewBox="0 0 14 14"><rect x="0.5" y="3.2" width="8.3" height="7.6" rx="0.6" fill="#8e9096"/><path d="M9.3 6 L13.3 3.2 L13.3 10.8 L9.3 8 Z" fill="#8e9096"/><line x1="0.6" y1="12.2" x2="10.4" y2="2.4" stroke="#fff" stroke-width="2.2"/><line x1="0.4" y1="12" x2="10.6" y2="2" stroke="#f06a60" stroke-width="1"/></svg>
<div class="a" style="left:959.5px;top:217.75px;width:25.2px;height:25.2px;border-radius:50%;background:#4a6dbf"></div>
<div class="t" style="left:959.5px;top:224.75px;width:25.2px;text-align:center;font-size:10.2px;color:#fff;letter-spacing:-0.3px">云潇</div>
<div class="t" style="left:991px;top:226.55px;font-size:10px;color:#2c2f38">侯云潇</div>
<svg class="a" style="left:1212.40px;top:223.35px" width="14" height="14" viewBox="0 0 14 14"><rect x="4.5" y="0.4" width="5" height="9.6" rx="2.5" fill="#8e9096"/><path d="M2.3 7 A4.7 4.7 0 0 0 11.7 7" fill="none" stroke="#8e9096" stroke-width="0.9"/><line x1="7" y1="11.6" x2="7" y2="13" stroke="#8e9096" stroke-width="0.9"/><line x1="4.2" y1="13.2" x2="9.8" y2="13.2" stroke="#8e9096" stroke-width="0.9"/><line x1="2.2" y1="12.6" x2="11.8" y2="3" stroke="#fff" stroke-width="2"/><line x1="2" y1="12.4" x2="11.8" y2="2.6" stroke="#f07a70" stroke-width="0.9"/></svg>
<svg class="a" style="left:1232.50px;top:223.35px" width="14" height="14" viewBox="0 0 14 14"><rect x="0.5" y="3.2" width="8.3" height="7.6" rx="0.6" fill="#8e9096"/><path d="M9.3 6 L13.3 3.2 L13.3 10.8 L9.3 8 Z" fill="#8e9096"/><line x1="0.6" y1="12.2" x2="10.4" y2="2.4" stroke="#fff" stroke-width="2.2"/><line x1="0.4" y1="12" x2="10.6" y2="2" stroke="#f06a60" stroke-width="1"/></svg>
<svg class="a" style="left:959.50px;top:254.66px" width="25.2" height="25.2" viewBox="0 0 24 24"><defs><clipPath id="cphoto7"><circle cx="12" cy="12" r="12"/></clipPath></defs><g clip-path="url(#cphoto7)"><rect width="24" height="24" fill="#a9aca6"/><path d="M0 17 Q6 15 12 20 L12 24 L0 24 Z" fill="#4a7638"/>
<path d="M3 6 L13 9 L21 5 L20 7 L14 11 Q20 18 19 22 L8 23 Q10 16 12 11 Z" fill="#e6e2cc"/><circle cx="13" cy="5" r="2.2" fill="#1e1e1e"/></g></svg>
<div class="t" style="left:991px;top:263.46px;font-size:10px;color:#2c2f38">李文亭</div>
<svg class="a" style="left:1212.40px;top:260.26px" width="14" height="14" viewBox="0 0 14 14"><rect x="4.5" y="0.4" width="5" height="9.6" rx="2.5" fill="#8e9096"/><path d="M2.3 7 A4.7 4.7 0 0 0 11.7 7" fill="none" stroke="#8e9096" stroke-width="0.9"/><line x1="7" y1="11.6" x2="7" y2="13" stroke="#8e9096" stroke-width="0.9"/><line x1="4.2" y1="13.2" x2="9.8" y2="13.2" stroke="#8e9096" stroke-width="0.9"/><line x1="2.2" y1="12.6" x2="11.8" y2="3" stroke="#fff" stroke-width="2"/><line x1="2" y1="12.4" x2="11.8" y2="2.6" stroke="#f07a70" stroke-width="0.9"/></svg>
<svg class="a" style="left:1232.50px;top:260.26px" width="14" height="14" viewBox="0 0 14 14"><rect x="0.5" y="3.2" width="8.3" height="7.6" rx="0.6" fill="#8e9096"/><path d="M9.3 6 L13.3 3.2 L13.3 10.8 L9.3 8 Z" fill="#8e9096"/><line x1="0.6" y1="12.2" x2="10.4" y2="2.4" stroke="#fff" stroke-width="2.2"/><line x1="0.4" y1="12" x2="10.6" y2="2" stroke="#f06a60" stroke-width="1"/></svg>
<svg class="a" style="left:959.50px;top:291.57px" width="25.2" height="25.2" viewBox="0 0 24 24"><defs><clipPath id="cphoto8"><circle cx="12" cy="12" r="12"/></clipPath></defs><g clip-path="url(#cphoto8)"><rect width="24" height="24" fill="#c6522c"/><path d="M8 24 Q7 16 9 10 Q9 5 14 5 Q19 5 19 10 Q21 17 20 24 Z" fill="#e8dcc6"/>
<circle cx="11" cy="5" r="1.6" fill="#e0a040"/><path d="M10 15 L18 15 L14 19 Z" fill="#4aa0a0"/><rect x="17" y="5" width="2" height="3" fill="#b08080"/></g></svg>
<div class="t" style="left:991px;top:300.37px;font-size:10px;color:#2c2f38">利梦缘</div>
<svg class="a" style="left:1212.40px;top:297.17px" width="14" height="14" viewBox="0 0 14 14"><rect x="4.5" y="0.4" width="5" height="9.6" rx="2.5" fill="#8e9096"/><path d="M2.3 7 A4.7 4.7 0 0 0 11.7 7" fill="none" stroke="#8e9096" stroke-width="0.9"/><line x1="7" y1="11.6" x2="7" y2="13" stroke="#8e9096" stroke-width="0.9"/><line x1="4.2" y1="13.2" x2="9.8" y2="13.2" stroke="#8e9096" stroke-width="0.9"/><line x1="2.2" y1="12.6" x2="11.8" y2="3" stroke="#fff" stroke-width="2"/><line x1="2" y1="12.4" x2="11.8" y2="2.6" stroke="#f07a70" stroke-width="0.9"/></svg>
<svg class="a" style="left:1232.50px;top:297.17px" width="14" height="14" viewBox="0 0 14 14"><rect x="0.5" y="3.2" width="8.3" height="7.6" rx="0.6" fill="#8e9096"/><path d="M9.3 6 L13.3 3.2 L13.3 10.8 L9.3 8 Z" fill="#8e9096"/><line x1="0.6" y1="12.2" x2="10.4" y2="2.4" stroke="#fff" stroke-width="2.2"/><line x1="0.4" y1="12" x2="10.6" y2="2" stroke="#f06a60" stroke-width="1"/></svg>
<div class="a" style="left:959.5px;top:328.48px;width:25.2px;height:25.2px;border-radius:50%;background:#4a6dbf"></div>
<div class="t" style="left:959.5px;top:335.48px;width:25.2px;text-align:center;font-size:10.2px;color:#fff;letter-spacing:-0.3px">晓露</div>
<div class="t" style="left:991px;top:337.28px;font-size:10px;color:#2c2f38">倪晓露</div>
<svg class="a" style="left:1212.40px;top:334.08px" width="14" height="14" viewBox="0 0 14 14"><rect x="4.5" y="0.4" width="5" height="9.6" rx="2.5" fill="#8e9096"/><path d="M2.3 7 A4.7 4.7 0 0 0 11.7 7" fill="none" stroke="#8e9096" stroke-width="0.9"/><line x1="7" y1="11.6" x2="7" y2="13" stroke="#8e9096" stroke-width="0.9"/><line x1="4.2" y1="13.2" x2="9.8" y2="13.2" stroke="#8e9096" stroke-width="0.9"/><line x1="2.2" y1="12.6" x2="11.8" y2="3" stroke="#fff" stroke-width="2"/><line x1="2" y1="12.4" x2="11.8" y2="2.6" stroke="#f07a70" stroke-width="0.9"/></svg>
<svg class="a" style="left:1232.50px;top:334.08px" width="14" height="14" viewBox="0 0 14 14"><rect x="0.5" y="3.2" width="8.3" height="7.6" rx="0.6" fill="#8e9096"/><path d="M9.3 6 L13.3 3.2 L13.3 10.8 L9.3 8 Z" fill="#8e9096"/><line x1="0.6" y1="12.2" x2="10.4" y2="2.4" stroke="#fff" stroke-width="2.2"/><line x1="0.4" y1="12" x2="10.6" y2="2" stroke="#f06a60" stroke-width="1"/></svg>
<div class="a" style="left:959.5px;top:365.39px;width:25.2px;height:25.2px;border-radius:50%;background:#4a6dbf"></div>
<div class="t" style="left:959.5px;top:372.39px;width:25.2px;text-align:center;font-size:10.2px;color:#fff;letter-spacing:-0.3px">金芳</div>
<div class="t" style="left:991px;top:374.19px;font-size:10px;color:#2c2f38">蒲金芳</div>
<svg class="a" style="left:1212.40px;top:370.99px" width="14" height="14" viewBox="0 0 14 14"><rect x="4.5" y="0.4" width="5" height="9.6" rx="2.5" fill="#8e9096"/><path d="M2.3 7 A4.7 4.7 0 0 0 11.7 7" fill="none" stroke="#8e9096" stroke-width="0.9"/><line x1="7" y1="11.6" x2="7" y2="13" stroke="#8e9096" stroke-width="0.9"/><line x1="4.2" y1="13.2" x2="9.8" y2="13.2" stroke="#8e9096" stroke-width="0.9"/><line x1="2.2" y1="12.6" x2="11.8" y2="3" stroke="#fff" stroke-width="2"/><line x1="2" y1="12.4" x2="11.8" y2="2.6" stroke="#f07a70" stroke-width="0.9"/></svg>
<svg class="a" style="left:1232.50px;top:370.99px" width="14" height="14" viewBox="0 0 14 14"><rect x="0.5" y="3.2" width="8.3" height="7.6" rx="0.6" fill="#8e9096"/><path d="M9.3 6 L13.3 3.2 L13.3 10.8 L9.3 8 Z" fill="#8e9096"/><line x1="0.6" y1="12.2" x2="10.4" y2="2.4" stroke="#fff" stroke-width="2.2"/><line x1="0.4" y1="12" x2="10.6" y2="2" stroke="#f06a60" stroke-width="1"/></svg>
<svg class="a" style="left:959.50px;top:402.30px" width="25.2" height="25.2" viewBox="0 0 24 24"><defs><clipPath id="cphoto11"><circle cx="12" cy="12" r="12"/></clipPath></defs><g clip-path="url(#cphoto11)"><rect width="24" height="24" fill="#d2b494"/><path d="M14 24 L24 8 L24 24 Z" fill="#2a2624"/><ellipse cx="15.5" cy="8.5" rx="6" ry="5.5" fill="#e4c8a8"/><ellipse cx="9" cy="14.5" rx="6" ry="5.5" fill="#dcbea0"/>
<path d="M0 15 L6 22 L2 24 L0 24 Z" fill="#e6b0b8"/><ellipse cx="8" cy="14.5" rx="0.7" ry="0.8" fill="#5a4030"/><ellipse cx="11.5" cy="14" rx="0.7" ry="0.8" fill="#5a4030"/><ellipse cx="14" cy="8.5" rx="0.7" ry="0.8" fill="#5a4030"/><ellipse cx="17.5" cy="8.5" rx="0.7" ry="0.8" fill="#5a4030"/></g></svg>
<div class="t" style="left:991px;top:411.10px;font-size:10px;color:#2c2f38">秦可馨</div>
<svg class="a" style="left:1212.40px;top:407.90px" width="14" height="14" viewBox="0 0 14 14"><rect x="4.5" y="0.4" width="5" height="9.6" rx="2.5" fill="#8e9096"/><path d="M2.3 7 A4.7 4.7 0 0 0 11.7 7" fill="none" stroke="#8e9096" stroke-width="0.9"/><line x1="7" y1="11.6" x2="7" y2="13" stroke="#8e9096" stroke-width="0.9"/><line x1="4.2" y1="13.2" x2="9.8" y2="13.2" stroke="#8e9096" stroke-width="0.9"/><line x1="2.2" y1="12.6" x2="11.8" y2="3" stroke="#fff" stroke-width="2"/><line x1="2" y1="12.4" x2="11.8" y2="2.6" stroke="#f07a70" stroke-width="0.9"/></svg>
<svg class="a" style="left:1232.50px;top:407.90px" width="14" height="14" viewBox="0 0 14 14"><rect x="0.5" y="3.2" width="8.3" height="7.6" rx="0.6" fill="#8e9096"/><path d="M9.3 6 L13.3 3.2 L13.3 10.8 L9.3 8 Z" fill="#8e9096"/><line x1="0.6" y1="12.2" x2="10.4" y2="2.4" stroke="#fff" stroke-width="2.2"/><line x1="0.4" y1="12" x2="10.6" y2="2" stroke="#f06a60" stroke-width="1"/></svg>
<svg class="a" style="left:959.50px;top:439.21px" width="25.2" height="25.2" viewBox="0 0 24 24"><defs><clipPath id="cphoto12"><circle cx="12" cy="12" r="12"/></clipPath></defs><g clip-path="url(#cphoto12)"><rect width="24" height="24" fill="#b3a586"/><rect width="24" height="9" fill="#c2b89c"/><ellipse cx="11" cy="14" rx="1.6" ry="2.4" fill="#e8e8e0"/><ellipse cx="14" cy="17" rx="2.2" ry="1" fill="#3a3a38"/></g></svg>
<div class="t" style="left:991px;top:448.01px;font-size:10px;color:#2c2f38">人大–程海源</div>
<svg class="a" style="left:1212.40px;top:444.81px" width="14" height="14" viewBox="0 0 14 14"><rect x="4.5" y="0.4" width="5" height="9.6" rx="2.5" fill="#8e9096"/><path d="M2.3 7 A4.7 4.7 0 0 0 11.7 7" fill="none" stroke="#8e9096" stroke-width="0.9"/><line x1="7" y1="11.6" x2="7" y2="13" stroke="#8e9096" stroke-width="0.9"/><line x1="4.2" y1="13.2" x2="9.8" y2="13.2" stroke="#8e9096" stroke-width="0.9"/><line x1="2.2" y1="12.6" x2="11.8" y2="3" stroke="#fff" stroke-width="2"/><line x1="2" y1="12.4" x2="11.8" y2="2.6" stroke="#f07a70" stroke-width="0.9"/></svg>
<svg class="a" style="left:1232.50px;top:444.81px" width="14" height="14" viewBox="0 0 14 14"><rect x="0.5" y="3.2" width="8.3" height="7.6" rx="0.6" fill="#8e9096"/><path d="M9.3 6 L13.3 3.2 L13.3 10.8 L9.3 8 Z" fill="#8e9096"/><line x1="0.6" y1="12.2" x2="10.4" y2="2.4" stroke="#fff" stroke-width="2.2"/><line x1="0.4" y1="12" x2="10.6" y2="2" stroke="#f06a60" stroke-width="1"/></svg>
<svg class="a" style="left:959.50px;top:476.12px" width="25.2" height="25.2" viewBox="0 0 24 24"><defs><clipPath id="cphoto13"><circle cx="12" cy="12" r="12"/></clipPath></defs><g clip-path="url(#cphoto13)"><rect width="24" height="24" fill="#7e94bc"/><rect width="24" height="6" fill="#b8c8e0"/><ellipse cx="11" cy="12" rx="5" ry="5.5" fill="#f2d8d8"/><path d="M6 2 L9 6 L5 7 Z M13 2 L16 6 L12 7 Z" fill="#e890b8"/>
<path d="M3 24 Q4 17 11 17 Q14 17 15 24 Z" fill="#e85a5a"/><ellipse cx="6" cy="20" rx="3" ry="2" fill="#f0b040"/><ellipse cx="18" cy="15" rx="3.5" ry="4" fill="#9aa060"/></g></svg>
<div class="t" style="left:991px;top:484.92px;font-size:10px;color:#2c2f38">孙心茹</div>
<svg class="a" style="left:1212.40px;top:481.72px" width="14" height="14" viewBox="0 0 14 14"><rect x="4.5" y="0.4" width="5" height="9.6" rx="2.5" fill="#8e9096"/><path d="M2.3 7 A4.7 4.7 0 0 0 11.7 7" fill="none" stroke="#8e9096" stroke-width="0.9"/><line x1="7" y1="11.6" x2="7" y2="13" stroke="#8e9096" stroke-width="0.9"/><line x1="4.2" y1="13.2" x2="9.8" y2="13.2" stroke="#8e9096" stroke-width="0.9"/><line x1="2.2" y1="12.6" x2="11.8" y2="3" stroke="#fff" stroke-width="2"/><line x1="2" y1="12.4" x2="11.8" y2="2.6" stroke="#f07a70" stroke-width="0.9"/></svg>
<svg class="a" style="left:1232.50px;top:481.72px" width="14" height="14" viewBox="0 0 14 14"><rect x="0.5" y="3.2" width="8.3" height="7.6" rx="0.6" fill="#8e9096"/><path d="M9.3 6 L13.3 3.2 L13.3 10.8 L9.3 8 Z" fill="#8e9096"/><line x1="0.6" y1="12.2" x2="10.4" y2="2.4" stroke="#fff" stroke-width="2.2"/><line x1="0.4" y1="12" x2="10.6" y2="2" stroke="#f06a60" stroke-width="1"/></svg>
<div class="a" style="left:959.5px;top:513.03px;width:25.2px;height:25.2px;border-radius:50%;background:#4a6dbf"></div>
<div class="t" style="left:959.5px;top:520.03px;width:25.2px;text-align:center;font-size:10.2px;color:#fff;letter-spacing:-0.3px">谭爽</div>
<div class="t" style="left:991px;top:521.83px;font-size:10px;color:#2c2f38">谭爽</div>
<svg class="a" style="left:1212.40px;top:518.63px" width="14" height="14" viewBox="0 0 14 14"><rect x="4.5" y="0.4" width="5" height="9.6" rx="2.5" fill="#8e9096"/><path d="M2.3 7 A4.7 4.7 0 0 0 11.7 7" fill="none" stroke="#8e9096" stroke-width="0.9"/><line x1="7" y1="11.6" x2="7" y2="13" stroke="#8e9096" stroke-width="0.9"/><line x1="4.2" y1="13.2" x2="9.8" y2="13.2" stroke="#8e9096" stroke-width="0.9"/><line x1="2.2" y1="12.6" x2="11.8" y2="3" stroke="#fff" stroke-width="2"/><line x1="2" y1="12.4" x2="11.8" y2="2.6" stroke="#f07a70" stroke-width="0.9"/></svg>
<svg class="a" style="left:1232.50px;top:518.63px" width="14" height="14" viewBox="0 0 14 14"><rect x="0.5" y="3.2" width="8.3" height="7.6" rx="0.6" fill="#8e9096"/><path d="M9.3 6 L13.3 3.2 L13.3 10.8 L9.3 8 Z" fill="#8e9096"/><line x1="0.6" y1="12.2" x2="10.4" y2="2.4" stroke="#fff" stroke-width="2.2"/><line x1="0.4" y1="12" x2="10.6" y2="2" stroke="#f06a60" stroke-width="1"/></svg>
<svg class="a" style="left:959.50px;top:549.94px" width="25.2" height="25.2" viewBox="0 0 24 24"><defs><clipPath id="cphoto15"><circle cx="12" cy="12" r="12"/></clipPath></defs><g clip-path="url(#cphoto15)"><defs><linearGradient id="g15" x1="0" y1="0" x2="0" y2="1"><stop offset="0" stop-color="#6f90c8"/><stop offset="0.42" stop-color="#c8d8ec"/><stop offset="0.5" stop-color="#f2f4f6"/><stop offset="0.56" stop-color="#6888b8"/><stop offset="1" stop-color="#2c4c80"/></linearGradient></defs><rect width="24" height="24" fill="url(#g15)"/><ellipse cx="12" cy="12" rx="4" ry="1.5" fill="#fff" opacity=".8"/></g></svg>
<div class="t" style="left:991px;top:558.74px;font-size:10px;color:#2c2f38">王野</div>
<svg class="a" style="left:1212.40px;top:555.54px" width="14" height="14" viewBox="0 0 14 14"><rect x="4.5" y="0.4" width="5" height="9.6" rx="2.5" fill="#8e9096"/><path d="M2.3 7 A4.7 4.7 0 0 0 11.7 7" fill="none" stroke="#8e9096" stroke-width="0.9"/><line x1="7" y1="11.6" x2="7" y2="13" stroke="#8e9096" stroke-width="0.9"/><line x1="4.2" y1="13.2" x2="9.8" y2="13.2" stroke="#8e9096" stroke-width="0.9"/><line x1="2.2" y1="12.6" x2="11.8" y2="3" stroke="#fff" stroke-width="2"/><line x1="2" y1="12.4" x2="11.8" y2="2.6" stroke="#f07a70" stroke-width="0.9"/></svg>
<svg class="a" style="left:1232.50px;top:555.54px" width="14" height="14" viewBox="0 0 14 14"><rect x="0.5" y="3.2" width="8.3" height="7.6" rx="0.6" fill="#8e9096"/><path d="M9.3 6 L13.3 3.2 L13.3 10.8 L9.3 8 Z" fill="#8e9096"/><line x1="0.6" y1="12.2" x2="10.4" y2="2.4" stroke="#fff" stroke-width="2.2"/><line x1="0.4" y1="12" x2="10.6" y2="2" stroke="#f06a60" stroke-width="1"/></svg>
</body></html>
